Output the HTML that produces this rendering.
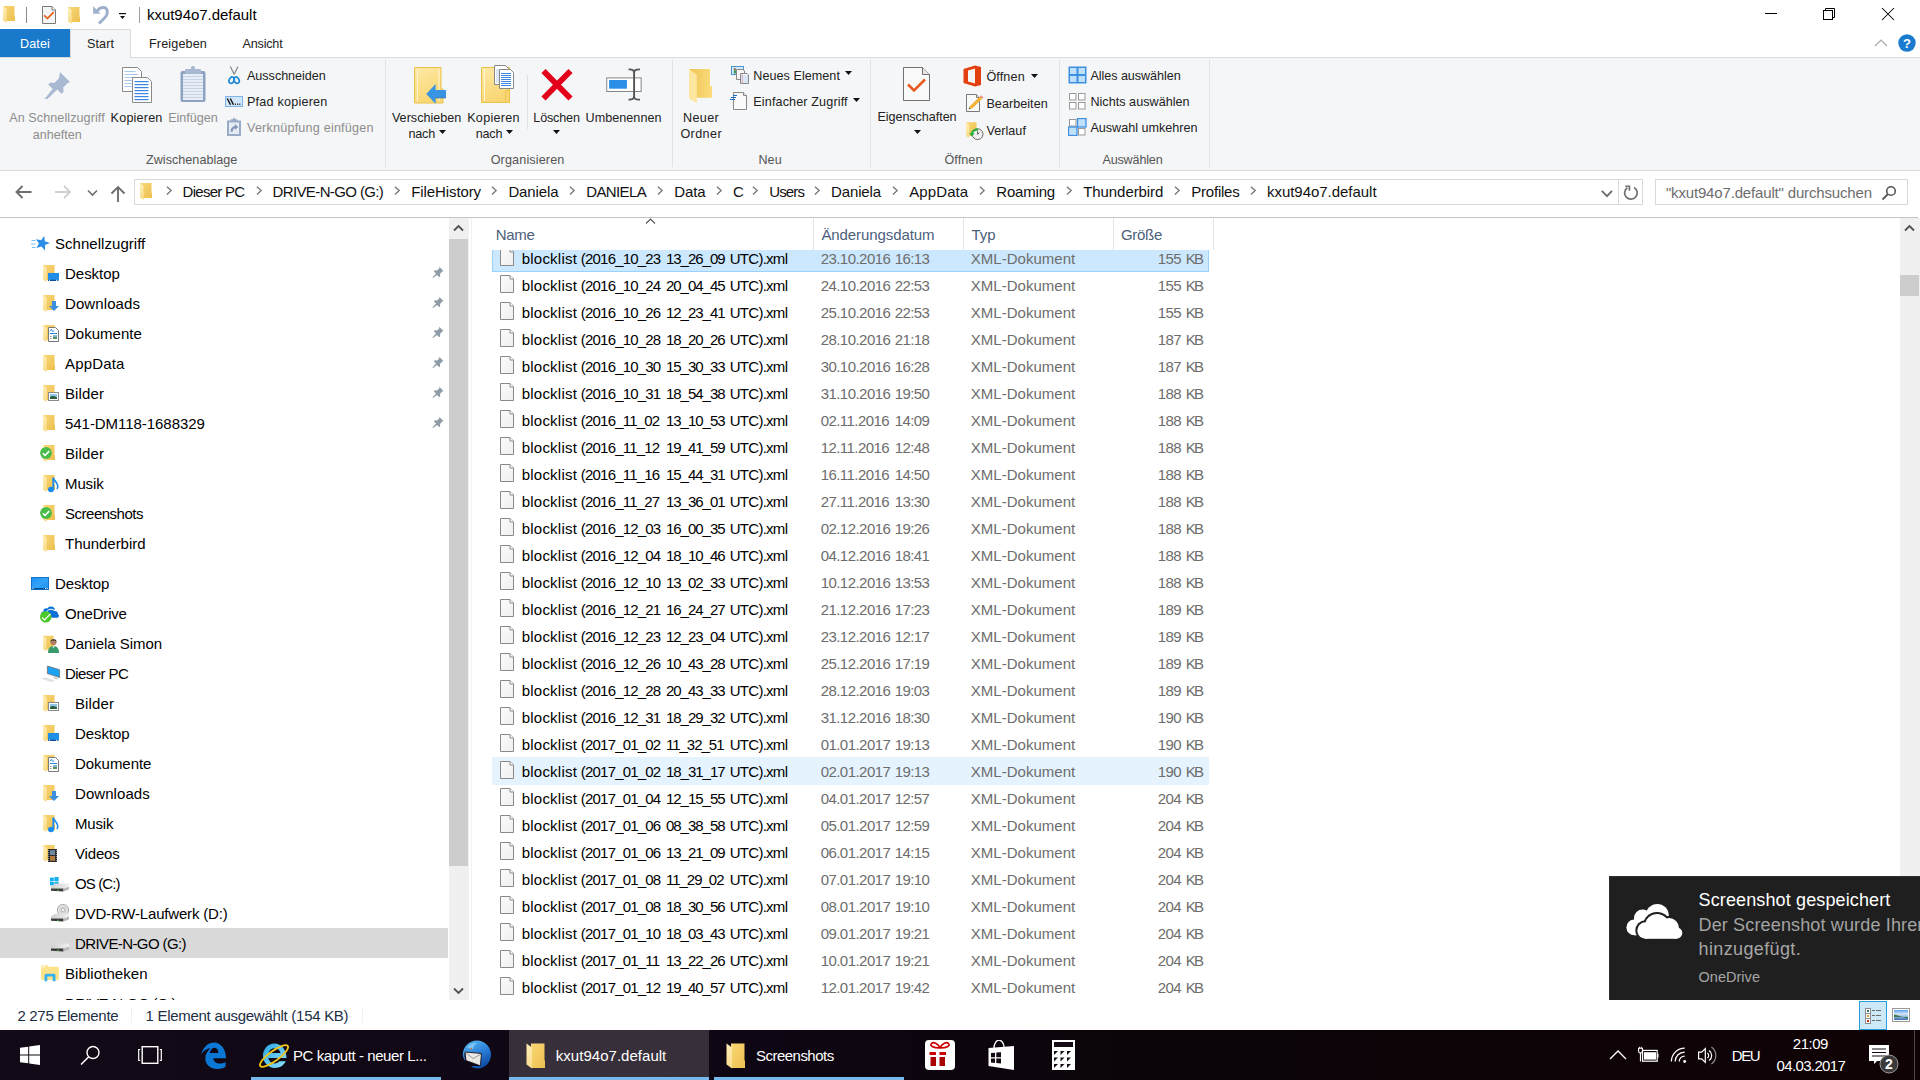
<!DOCTYPE html><html><head><meta charset="utf-8"><style>
html,body{margin:0;padding:0}
body{width:1920px;height:1080px;overflow:hidden;position:relative;background:#fff;font-family:"Liberation Sans",sans-serif}
.a{position:absolute;display:block}
.t{position:absolute;line-height:1px;white-space:nowrap}
</style></head><body>
<svg width="0" height="0" style="position:absolute">
<defs>
<linearGradient id="fg" x1="0" y1="0" x2="1" y2="1"><stop offset="0" stop-color="#f8d775"/><stop offset="1" stop-color="#eebf4f"/></linearGradient>
<linearGradient id="ff" x1="0" y1="0" x2="0" y2="1"><stop offset="0" stop-color="#ffeeb8"/><stop offset="1" stop-color="#f9dc8a"/></linearGradient>
<linearGradient id="fg2" x1="0" y1="0" x2="0.4" y2="1"><stop offset="0" stop-color="#fee9a6"/><stop offset="1" stop-color="#f9d673"/></linearGradient>
<symbol id="fold" viewBox="0 0 12 17"><path d="M0 0h11.5v10h0.5v5H0z" fill="url(#fg)"/><path d="M0 0l3.6 2.8V17L0 14.8z" fill="url(#ff)"/></symbol>
<linearGradient id="dg" x1="0" y1="0" x2="1" y2="1"><stop offset="0" stop-color="#fbfbfb"/><stop offset="1" stop-color="#efefef"/></linearGradient><symbol id="doc" viewBox="0 0 14 18"><path d="M0.5 0.5h9.5l3.5 3.5v13.5h-13z" fill="url(#dg)" stroke="#8a8a8a" stroke-linejoin="miter"/><path d="M10 0.5v3.5h3.5" fill="#fff" stroke="#8a8a8a"/></symbol>
<symbol id="pin" viewBox="0 0 12 12"><path d="M7 0.5l4.5 4.5-1.2 0.6-2.3 2.3 0.2 2.3-1 1-2.2-2.2L1 12 0.4 11.5 4 7.5 1.8 5.3l1-1 2.3 0.2 2.3-2.3z" fill="#8f9ca7"/></symbol>
</defs></svg>

<svg class="a" style="left:3px;top:6px;" width="12" height="17" viewBox="0 0 12 17"><use href="#fold"/></svg>
<div class="a" style="left:26px;top:7px;width:1px;height:16px;background:#8a8a8a;"></div>
<svg class="a" style="left:42px;top:6px;" width="14" height="18" viewBox="0 0 14 18"><path d="M0.5 0.5h9.5l3.5 3.5v13.5h-13z" fill="#f3f4f6" stroke="#7a7a7a"/><path d="M10 0.5v3.5h3.5" fill="#fff" stroke="#7a7a7a"/><path d="M2.1 9.4l3.4 3 6.2-6.3" fill="none" stroke="#ea5a0c" stroke-width="1.5"/></svg>
<svg class="a" style="left:68px;top:7px;" width="12" height="17" viewBox="0 0 12 17"><use href="#fold"/></svg>
<svg class="a" style="left:92px;top:5px;" width="18" height="20" viewBox="0 0 18 20"><path d="M1.1 1.1V8.8H8.5z" fill="#9fb0cc"/><path d="M4.5 7 C6.5 3.5 10 2.3 12 2.5 C14.5 2.8 15.3 5 15.3 7.5 C15.3 10 14 11.5 12.5 13 L7 18.5" fill="none" stroke="#9fb0cc" stroke-width="3"/></svg>
<svg class="a" style="left:119px;top:12px;" width="8" height="8" viewBox="0 0 8 8"><rect x="0" y="1" width="7" height="1.2" fill="#111"/><path d="M1 4h5L3.5 7z" fill="#111"/></svg>
<div class="a" style="left:139px;top:7px;width:1px;height:16px;background:#a0a0a0;"></div>
<div class="t" style="left:147.00px;top:14.00px;font-size:15px;color:#000;letter-spacing:-0.036px;">kxut94o7.default</div>
<div class="a" style="left:1765px;top:13px;width:12px;height:1px;background:#000;"></div>
<svg class="a" style="left:1822px;top:7px;" width="14" height="14" viewBox="0 0 14 14"><rect x="1.5" y="3.5" width="9" height="9" fill="none" stroke="#000"/><path d="M3.5 3.5V1.5h9v9h-2" fill="none" stroke="#000"/></svg>
<svg class="a" style="left:1881px;top:7px;" width="14" height="14" viewBox="0 0 14 14"><path d="M1 1l12 12M13 1L1 13" stroke="#000" stroke-width="1.05"/></svg>
<div class="a" style="left:0px;top:57px;width:1920px;height:1px;background:#dadbdc;"></div>
<div class="a" style="left:0px;top:29px;width:70px;height:28px;background:#1979ca;"></div>
<div class="t" style="left:20.00px;top:44.00px;font-size:12.6px;color:#fff;letter-spacing:0.117px;">Datei</div>
<div class="a" style="left:70px;top:29px;width:61px;height:29px;background:#f5f6f7;box-sizing:border-box;border:1px solid #dadbdc;border-bottom:none"></div>
<div class="t" style="left:87.00px;top:44.00px;font-size:12.6px;color:#222;letter-spacing:0.078px;">Start</div>
<div class="t" style="left:149.00px;top:44.00px;font-size:12.6px;color:#222;letter-spacing:0.140px;">Freigeben</div>
<div class="t" style="left:242.50px;top:44.00px;font-size:12.6px;color:#222;letter-spacing:-0.188px;">Ansicht</div>
<svg class="a" style="left:1874px;top:38px;" width="14" height="10" viewBox="0 0 14 10"><path d="M1 8l6-6 6 6" fill="none" stroke="#a8a8a8" stroke-width="1.2"/></svg>
<svg class="a" style="left:1898px;top:34px;" width="18" height="18" viewBox="0 0 18 18"><circle cx="9" cy="9" r="8.7" fill="#1a7bd0"/><text x="9" y="14.2" text-anchor="middle" font-family="Liberation Sans" font-weight="bold" font-size="13" fill="#fff">?</text></svg>
<div class="a" style="left:0px;top:58px;width:1920px;height:112px;background:#f5f6f7;"></div>
<div class="a" style="left:0px;top:170px;width:1920px;height:1px;background:#dadbdc;"></div>
<div class="a" style="left:385px;top:60px;width:1px;height:107px;background:#e2e3e4;"></div>
<div class="a" style="left:672px;top:60px;width:1px;height:107px;background:#e2e3e4;"></div>
<div class="a" style="left:870px;top:60px;width:1px;height:107px;background:#e2e3e4;"></div>
<div class="a" style="left:1059px;top:60px;width:1px;height:107px;background:#e2e3e4;"></div>
<div class="a" style="left:1209px;top:60px;width:1px;height:107px;background:#e2e3e4;"></div>
<div class="t" style="left:146.00px;top:160.00px;font-size:12.6px;color:#555;letter-spacing:0.025px;">Zwischenablage</div>
<div class="t" style="left:490.70px;top:160.00px;font-size:12.6px;color:#555;letter-spacing:0.139px;">Organisieren</div>
<div class="t" style="left:758.40px;top:160.00px;font-size:12.6px;color:#555;letter-spacing:0.095px;">Neu</div>
<div class="t" style="left:944.50px;top:160.00px;font-size:12.6px;color:#555;letter-spacing:0.067px;">Öffnen</div>
<div class="t" style="left:1102.40px;top:160.00px;font-size:12.6px;color:#555;letter-spacing:-0.160px;">Auswählen</div>
<svg class="a" style="left:43px;top:71px;" width="28" height="28" viewBox="0 0 28 28"><path d="M17 1l10 10-2.2 1-4.6 4.6 0.4 4.2-2 2-4.4-4.4L3 29.5 1.5 28 9.6 17.9 5.2 13.5l2-2 4.2 0.4L16 7.3z" fill="#a9b9d1"/></svg>
<div class="t" style="left:9.20px;top:118.00px;font-size:12.6px;color:#8d8d8d;letter-spacing:0.075px;">An Schnellzugriff</div>
<div class="t" style="left:32.70px;top:135.00px;font-size:12.6px;color:#8d8d8d;letter-spacing:-0.006px;">anheften</div>
<svg class="a" style="left:121px;top:66px;" width="32" height="38" viewBox="0 0 32 38"><path d="M1.5 1.5h15l4 4v20h-19z" fill="#fff" stroke="#8a8a8a"/><rect x="3.5" y="5" width="11" height="1" fill="#a9c8ee"/><rect x="3.5" y="8" width="14" height="1" fill="#a9c8ee"/><rect x="3.5" y="11" width="14" height="1" fill="#a9c8ee"/><rect x="3.5" y="14" width="14" height="1" fill="#a9c8ee"/><rect x="3.5" y="17" width="14" height="1" fill="#a9c8ee"/><rect x="3.5" y="20" width="14" height="1" fill="#a9c8ee"/><path d="M11.5 11.5h15l4 4v21h-19z" fill="#fff" stroke="#8a8a8a"/><rect x="13.5" y="15" width="14" height="1.2" fill="#3b86e0"/><rect x="13.5" y="18" width="14" height="1.2" fill="#3b86e0"/><rect x="13.5" y="21" width="14" height="1.2" fill="#3b86e0"/><rect x="13.5" y="24" width="14" height="1.2" fill="#3b86e0"/><rect x="13.5" y="27" width="14" height="1.2" fill="#3b86e0"/><rect x="13.5" y="30" width="14" height="1.2" fill="#3b86e0"/><rect x="13.5" y="33" width="14" height="1.2" fill="#3b86e0"/></svg>
<div class="t" style="left:110.60px;top:118.00px;font-size:12.6px;color:#222;letter-spacing:0.195px;">Kopieren</div>
<svg class="a" style="left:179px;top:65px;" width="28" height="39" viewBox="0 0 28 39"><rect x="1.5" y="6" width="25" height="31" rx="2" fill="#8ea3c1"/><rect x="4" y="9" width="20" height="26" fill="#e8eef7"/><rect x="4" y="11" width="20" height="1" fill="#c8d3e3"/><rect x="4" y="14" width="20" height="1" fill="#c8d3e3"/><rect x="4" y="17" width="20" height="1" fill="#c8d3e3"/><rect x="4" y="20" width="20" height="1" fill="#c8d3e3"/><rect x="4" y="23" width="20" height="1" fill="#c8d3e3"/><rect x="4" y="26" width="20" height="1" fill="#c8d3e3"/><rect x="4" y="29" width="20" height="1" fill="#c8d3e3"/><rect x="4" y="32" width="20" height="1" fill="#c8d3e3"/><rect x="6" y="4" width="16" height="5" rx="1" fill="#a9b9d1"/><rect x="12" y="1" width="4" height="4" rx="1.5" fill="#a9b9d1"/></svg>
<div class="t" style="left:168.20px;top:118.00px;font-size:12.6px;color:#8d8d8d;letter-spacing:-0.030px;">Einfügen</div>
<svg class="a" style="left:227px;top:65px;" width="14" height="20" viewBox="0 0 14 20"><path d="M3.3 1.5L7.3 9.5M11 1.5L7 9.5" stroke="#8a8a8a" stroke-width="1.3"/><ellipse cx="4.6" cy="15.2" rx="2.4" ry="3.3" transform="rotate(28 4.6 15.2)" fill="none" stroke="#1d87d6" stroke-width="1.7"/><ellipse cx="9.6" cy="15.2" rx="2.4" ry="3.3" transform="rotate(-28 9.6 15.2)" fill="none" stroke="#1d87d6" stroke-width="1.7"/></svg>
<div class="t" style="left:247.00px;top:76.00px;font-size:12.6px;color:#222;letter-spacing:-0.030px;">Ausschneiden</div>
<svg class="a" style="left:225px;top:96px;" width="18" height="11" viewBox="0 0 18 11"><rect x="0.5" y="0.5" width="17" height="10" fill="#cfe6fa" stroke="#7fb2e6"/><path d="M2.3 2.5l3.2 6.2M5.3 2.5l3.2 6.2" stroke="#111" stroke-width="1.4"/><rect x="9.8" y="7.6" width="1.2" height="1.2" fill="#111"/><rect x="12" y="7.6" width="1.2" height="1.2" fill="#111"/><rect x="14.2" y="7.6" width="1.2" height="1.2" fill="#111"/></svg>
<div class="t" style="left:247.00px;top:102.00px;font-size:12.6px;color:#222;letter-spacing:0.219px;">Pfad kopieren</div>
<svg class="a" style="left:226px;top:117px;" width="16" height="20" viewBox="0 0 16 20"><path d="M6.2 3L8 0.3 9.8 3z" fill="#9aabc6"/><rect x="4.5" y="2.3" width="7" height="2.2" fill="#9aabc6"/><rect x="1" y="3.5" width="14" height="15.5" fill="#9aabc6"/><rect x="3" y="5.5" width="10" height="11.5" fill="#e6ecf5"/><path d="M5.6 14.8C5.6 11.5 7 10.2 9.5 10" fill="none" stroke="#8196b6" stroke-width="2.2"/><path d="M8.8 7L12.3 10 8.8 13z" fill="#8196b6"/></svg>
<div class="t" style="left:247.00px;top:128.00px;font-size:12.6px;color:#8d8d8d;letter-spacing:0.205px;">Verknüpfung einfügen</div>
<svg class="a" style="left:413px;top:66px;" width="34" height="40" viewBox="0 0 34 40"><path d="M1.5 1.5H28V23H30V37H1.5Z" fill="url(#fg2)" stroke="#e9c24c"/><path d="M4.5 3V35.5M26 3V35.5" stroke="#fff6d6" stroke-width="1"/><path d="M13.25 28L22.6 18V24H33V31.8H22.6V37.75Z" fill="#3a94e4"/><path d="M22.6 31.8H33" stroke="#2576c4" stroke-width="1"/></svg>
<div class="t" style="left:391.90px;top:118.00px;font-size:12.6px;color:#222;letter-spacing:0.014px;">Verschieben</div>
<div class="t" style="left:408.40px;top:134.00px;font-size:12.6px;color:#222;letter-spacing:-0.181px;">nach</div>
<svg class="a" style="left:439px;top:130px;" width="7" height="4" viewBox="0 0 7 4"><path d="M0 0h7L3.5 4z" fill="#111"/></svg>
<svg class="a" style="left:480px;top:64px;" width="36" height="40" viewBox="0 0 36 40"><path d="M1.5 3.5H29.5V38.5H1.5Z" fill="url(#fg2)" stroke="#e9c24c"/><path d="M4.5 5V37" stroke="#fff6d6"/><path d="M25.5 38.5V27Q27.5 24.5 29.5 27V38.5z" fill="#fbd370" stroke="#e9c24c" stroke-width="0.8"/><path d="M14.5 1.5H25.5L28.5 4.5V20.5H14.5Z" fill="#fff" stroke="#888"/><path d="M16 6h7" stroke="#a9c8ee" stroke-width="0.9"/><path d="M16 8h7" stroke="#a9c8ee" stroke-width="0.9"/><path d="M16 10h7" stroke="#a9c8ee" stroke-width="0.9"/><path d="M16 12h7" stroke="#a9c8ee" stroke-width="0.9"/><path d="M16 14h7" stroke="#a9c8ee" stroke-width="0.9"/><path d="M16 16h7" stroke="#a9c8ee" stroke-width="0.9"/><path d="M16 18h7" stroke="#a9c8ee" stroke-width="0.9"/><path d="M19.5 5.5H30.5L33.5 8.5V24.5H19.5Z" fill="#fff" stroke="#888"/><path d="M21 9.5h10" stroke="#3b86e0" stroke-width="1"/><path d="M21 11.5h10" stroke="#3b86e0" stroke-width="1"/><path d="M21 13.5h10" stroke="#3b86e0" stroke-width="1"/><path d="M21 15.5h10" stroke="#3b86e0" stroke-width="1"/><path d="M21 17.5h10" stroke="#3b86e0" stroke-width="1"/><path d="M21 19.5h10" stroke="#3b86e0" stroke-width="1"/><path d="M21 21.5h10" stroke="#3b86e0" stroke-width="1"/></svg>
<div class="t" style="left:467.20px;top:118.00px;font-size:12.6px;color:#222;letter-spacing:0.283px;">Kopieren</div>
<div class="t" style="left:475.70px;top:134.00px;font-size:12.6px;color:#222;letter-spacing:-0.181px;">nach</div>
<svg class="a" style="left:506px;top:130px;" width="7" height="4" viewBox="0 0 7 4"><path d="M0 0h7L3.5 4z" fill="#111"/></svg>
<div class="a" style="left:527px;top:75px;width:1px;height:54px;background:#dfe0e1;"></div>
<svg class="a" style="left:541px;top:69px;" width="32" height="32" viewBox="0 0 32 32"><path d="M2.5 2L29.5 29.5M29.5 2L2.5 29.5" stroke="#e2001a" stroke-width="5.8"/></svg>
<div class="t" style="left:533.30px;top:118.00px;font-size:12.6px;color:#222;letter-spacing:-0.162px;">Löschen</div>
<svg class="a" style="left:553px;top:130px;" width="7" height="4" viewBox="0 0 7 4"><path d="M0 0h7L3.5 4z" fill="#111"/></svg>
<svg class="a" style="left:605px;top:67px;" width="37" height="35" viewBox="0 0 37 35"><rect x="1.75" y="10.9" width="34.4" height="13.6" fill="#fff" stroke="#888"/><rect x="4.1" y="13" width="17.8" height="8.7" fill="#2b8ee6"/><path d="M29.1 4V30.5" stroke="#555" stroke-width="1.9"/><path d="M23.5 2.5C26 2.3 28.5 2.8 29.1 4.8 29.7 2.8 32.2 2.3 35 2.5M23.5 32.6C26 32.8 28.5 32.3 29.1 30.2 29.7 32.3 32.2 32.8 35 32.6" fill="none" stroke="#555" stroke-width="1.7"/></svg>
<div class="t" style="left:585.50px;top:118.00px;font-size:12.6px;color:#222;letter-spacing:0.044px;">Umbenennen</div>
<svg class="a" style="left:688px;top:68px;" width="25" height="36" viewBox="0 0 25 36"><defs><linearGradient id="nfg" x1="0" y1="0" x2="1" y2="0"><stop offset="0" stop-color="#edc455"/><stop offset="1" stop-color="#fbdc7a"/></linearGradient></defs><path d="M1 1H22V18.3H24V29.7H1z" fill="url(#nfg)"/><path d="M1 1L8.8 6.8V34.9L1 30.6z" fill="#fde6a0"/></svg>
<div class="t" style="left:683.10px;top:118.00px;font-size:12.6px;color:#222;letter-spacing:0.316px;">Neuer</div>
<div class="t" style="left:680.40px;top:134.00px;font-size:12.6px;color:#222;letter-spacing:0.398px;">Ordner</div>
<svg class="a" style="left:730px;top:65px;" width="20" height="20" viewBox="0 0 20 20"><rect x="1.5" y="1.5" width="12" height="8" fill="#d5ebfa" stroke="#4a94cc"/><circle cx="4.8" cy="4" r="1.1" fill="#8a5a3a"/><rect x="3.8" y="5.2" width="2.2" height="3.3" fill="#3a9a5a"/><path d="M6.5 4.5h6.5l1.5 1.5v8.5h-8z" fill="#f7f7f7" stroke="#888"/><path d="M10.5 8.5h6.5l1.5 1.5v8.5h-8z" fill="#fff" stroke="#888"/><path d="M11 11h7M11 13h7M11 15h7M11 17h7" stroke="#a9c8ee" stroke-width="0.9"/><path d="M12.3 9v9.5" stroke="#eaa0a0" stroke-width="0.8"/></svg>
<div class="t" style="left:753.30px;top:76.00px;font-size:12.6px;color:#222;letter-spacing:0.043px;">Neues Element</div>
<svg class="a" style="left:845px;top:71px;" width="7" height="4" viewBox="0 0 7 4"><path d="M0 0h7L3.5 4z" fill="#111"/></svg>
<svg class="a" style="left:729px;top:91px;" width="20" height="20" viewBox="0 0 20 20"><path d="M4.5 1.5h10l3 3v14h-13z" fill="#fafafa" stroke="#888"/><path d="M14.5 1.5v3h3" fill="#eee" stroke="#888"/><path d="M4 4.5h4M2 6.5h5M1 8.5h5" stroke="#1d6fc1" stroke-width="1.2"/></svg>
<div class="t" style="left:753.30px;top:102.00px;font-size:12.6px;color:#222;letter-spacing:0.129px;">Einfacher Zugriff</div>
<svg class="a" style="left:853px;top:98px;" width="7" height="4" viewBox="0 0 7 4"><path d="M0 0h7L3.5 4z" fill="#111"/></svg>
<svg class="a" style="left:902px;top:66px;" width="30" height="38" viewBox="0 0 30 38"><path d="M1.5 1.5h19l7 7v26h-26z" fill="#fafafa" stroke="#707070"/><path d="M20.5 1.5v7h7" fill="#e6e6e6" stroke="#707070"/><path d="M6 18.5l6 6 11-11" fill="none" stroke="#e85c23" stroke-width="2.6"/></svg>
<div class="t" style="left:877.40px;top:117.00px;font-size:12.6px;color:#222;letter-spacing:-0.050px;">Eigenschaften</div>
<svg class="a" style="left:914px;top:130px;" width="7" height="4" viewBox="0 0 7 4"><path d="M0 0h7L3.5 4z" fill="#111"/></svg>
<svg class="a" style="left:963px;top:65px;" width="19" height="22" viewBox="0 0 19 22"><path d="M0.5 4L12 0.5 18 2v18l-6 1.5L0.5 18z" fill="#e3400f"/><path d="M5 5.5l7-2v15l-7-2z" fill="#f5f6f7"/></svg>
<div class="t" style="left:986.40px;top:77.00px;font-size:12.6px;color:#222;letter-spacing:0.134px;">Öffnen</div>
<svg class="a" style="left:1031px;top:74px;" width="7" height="4" viewBox="0 0 7 4"><path d="M0 0h7L3.5 4z" fill="#111"/></svg>
<svg class="a" style="left:965px;top:93px;" width="19" height="20" viewBox="0 0 19 20"><path d="M1.5 1.5h10l3 3v14h-13z" fill="#f8f8f8" stroke="#7a7a7a"/><path d="M11.5 1.5v3h3" fill="#e8e8e8" stroke="#7a7a7a"/><path d="M3.8 16.2l1.2-3.3 10-9.5 2.2 2.2-9.6 9.6z" fill="#f2b233"/><path d="M15 3.4l1.3-1.2 2.2 2.2-1.3 1.2z" fill="#ee8a8a"/><path d="M3.8 16.2l0.5-1.6 1.2 1.1z" fill="#333"/></svg>
<div class="t" style="left:986.40px;top:104.00px;font-size:12.6px;color:#222;letter-spacing:0.046px;">Bearbeiten</div>
<svg class="a" style="left:965px;top:121px;" width="20" height="20" viewBox="0 0 20 20"><use href="#fold" x="1" y="0.6" width="11" height="17"/><circle cx="12.6" cy="13.2" r="5.4" fill="#eeeeee" stroke="#6a6a6a" stroke-width="1"/><path d="M12.6 10.3V13.2l1.7-1.4" fill="none" stroke="#333" stroke-width="0.8"/><path d="M13 8.6C9.5 8.3 7.2 10.2 6.9 12.8" fill="none" stroke="#27b03a" stroke-width="2.3"/><path d="M4.2 12.2H9.6L6.9 15.6z" fill="#27b03a"/></svg>
<div class="t" style="left:986.40px;top:131.00px;font-size:12.6px;color:#222;letter-spacing:0.053px;">Verlauf</div>
<svg class="a" style="left:1068px;top:66px;" width="19" height="18" viewBox="0 0 19 18"><rect x="0.5" y="0.5" width="18" height="17" fill="#3d8fe0"/><rect x="2" y="2" width="6.5" height="6" fill="#bfe0fb"/><rect x="10.5" y="2" width="6.5" height="6" fill="#bfe0fb"/><rect x="2" y="10" width="6.5" height="6" fill="#bfe0fb"/><rect x="10.5" y="10" width="6.5" height="6" fill="#bfe0fb"/></svg>
<div class="t" style="left:1090.40px;top:76.00px;font-size:12.6px;color:#222;letter-spacing:-0.050px;">Alles auswählen</div>
<svg class="a" style="left:1069px;top:93px;" width="17" height="17" viewBox="0 0 17 17"><rect x="0.5" y="0.5" width="6.5" height="6.5" fill="#fff" stroke="#999"/><rect x="9.5" y="0.5" width="6.5" height="6.5" fill="#fff" stroke="#999"/><rect x="0.5" y="9.5" width="6.5" height="6.5" fill="#fff" stroke="#999"/><rect x="9.5" y="9.5" width="6.5" height="6.5" fill="#fff" stroke="#999"/></svg>
<div class="t" style="left:1090.40px;top:102.00px;font-size:12.6px;color:#222;letter-spacing:0.034px;">Nichts auswählen</div>
<svg class="a" style="left:1068px;top:118px;" width="19" height="18" viewBox="0 0 19 18"><rect x="1.5" y="1.5" width="6.5" height="6.5" fill="#fff" stroke="#999"/><rect x="9.5" y="0.5" width="8.5" height="8.5" fill="#bfe0fb" stroke="#3d8fe0" stroke-width="1.3"/><rect x="0.5" y="9" width="8.5" height="8.5" fill="#bfe0fb" stroke="#3d8fe0" stroke-width="1.3"/><rect x="10.5" y="10.5" width="6.5" height="6.5" fill="#fff" stroke="#999"/></svg>
<div class="t" style="left:1090.40px;top:128.00px;font-size:12.6px;color:#222;letter-spacing:-0.003px;">Auswahl umkehren</div>
<svg class="a" style="left:15px;top:185px;" width="18" height="14" viewBox="0 0 18 14"><path d="M1.5 7h15M7.5 1l-6 6 6 6" fill="none" stroke="#6e6e6e" stroke-width="1.9"/></svg>
<svg class="a" style="left:54px;top:185px;" width="18" height="14" viewBox="0 0 18 14"><path d="M1 7h15M10 1l6 6-6 6" fill="none" stroke="#d0d0d0" stroke-width="1.9"/></svg>
<svg class="a" style="left:87px;top:189px;" width="11" height="8" viewBox="0 0 11 8"><path d="M1 1.5l4.5 4.5 4.5-4.5" fill="none" stroke="#6e6e6e" stroke-width="1.6"/></svg>
<svg class="a" style="left:110px;top:185px;" width="16" height="17" viewBox="0 0 16 17"><path d="M8 2v15M1.5 8.5L8 2l6.5 6.5" fill="none" stroke="#6e6e6e" stroke-width="1.9"/></svg>
<div class="a" style="left:134px;top:179px;width:1509px;height:26px;background:#fff;box-sizing:border-box;border:1px solid #d9d9d9"></div>
<div class="a" style="left:1618px;top:180px;width:1px;height:24px;background:#d9d9d9;"></div>
<svg class="a" style="left:140px;top:183px;" width="12" height="17" viewBox="0 0 12 17"><use href="#fold"/></svg>
<div class="t" style="left:182.50px;top:191.00px;font-size:15px;color:#111;letter-spacing:-0.706px;">Dieser PC</div>
<svg class="a" style="left:165.5px;top:186px;" width="7" height="10" viewBox="0 0 7 10"><path d="M0.9 0.7L5.2 4.6 0.9 8.5" fill="none" stroke="#777" stroke-width="1.3"/></svg>
<div class="t" style="left:272.50px;top:191.00px;font-size:15px;color:#111;letter-spacing:-0.616px;">DRIVE-N-GO (G:)</div>
<svg class="a" style="left:255.5px;top:186px;" width="7" height="10" viewBox="0 0 7 10"><path d="M0.9 0.7L5.2 4.6 0.9 8.5" fill="none" stroke="#777" stroke-width="1.3"/></svg>
<div class="t" style="left:411.25px;top:191.00px;font-size:15px;color:#111;letter-spacing:-0.099px;">FileHistory</div>
<svg class="a" style="left:394.25px;top:186px;" width="7" height="10" viewBox="0 0 7 10"><path d="M0.9 0.7L5.2 4.6 0.9 8.5" fill="none" stroke="#777" stroke-width="1.3"/></svg>
<div class="t" style="left:508.40px;top:191.00px;font-size:15px;color:#111;letter-spacing:-0.124px;">Daniela</div>
<svg class="a" style="left:491.4px;top:186px;" width="7" height="10" viewBox="0 0 7 10"><path d="M0.9 0.7L5.2 4.6 0.9 8.5" fill="none" stroke="#777" stroke-width="1.3"/></svg>
<div class="t" style="left:586.25px;top:191.00px;font-size:15px;color:#111;letter-spacing:-0.634px;">DANIELA</div>
<svg class="a" style="left:569.25px;top:186px;" width="7" height="10" viewBox="0 0 7 10"><path d="M0.9 0.7L5.2 4.6 0.9 8.5" fill="none" stroke="#777" stroke-width="1.3"/></svg>
<div class="t" style="left:674.30px;top:191.00px;font-size:15px;color:#111;letter-spacing:-0.121px;">Data</div>
<svg class="a" style="left:657.3px;top:186px;" width="7" height="10" viewBox="0 0 7 10"><path d="M0.9 0.7L5.2 4.6 0.9 8.5" fill="none" stroke="#777" stroke-width="1.3"/></svg>
<div class="t" style="left:732.90px;top:191.00px;font-size:15px;color:#111;">C</div>
<svg class="a" style="left:715.9px;top:186px;" width="7" height="10" viewBox="0 0 7 10"><path d="M0.9 0.7L5.2 4.6 0.9 8.5" fill="none" stroke="#777" stroke-width="1.3"/></svg>
<div class="t" style="left:769.30px;top:191.00px;font-size:15px;color:#111;letter-spacing:-0.894px;">Users</div>
<svg class="a" style="left:752.3px;top:186px;" width="7" height="10" viewBox="0 0 7 10"><path d="M0.9 0.7L5.2 4.6 0.9 8.5" fill="none" stroke="#777" stroke-width="1.3"/></svg>
<div class="t" style="left:831.00px;top:191.00px;font-size:15px;color:#111;letter-spacing:-0.124px;">Daniela</div>
<svg class="a" style="left:814px;top:186px;" width="7" height="10" viewBox="0 0 7 10"><path d="M0.9 0.7L5.2 4.6 0.9 8.5" fill="none" stroke="#777" stroke-width="1.3"/></svg>
<div class="t" style="left:909.25px;top:191.00px;font-size:15px;color:#111;letter-spacing:0.090px;">AppData</div>
<svg class="a" style="left:892.25px;top:186px;" width="7" height="10" viewBox="0 0 7 10"><path d="M0.9 0.7L5.2 4.6 0.9 8.5" fill="none" stroke="#777" stroke-width="1.3"/></svg>
<div class="t" style="left:996.25px;top:191.00px;font-size:15px;color:#111;letter-spacing:-0.183px;">Roaming</div>
<svg class="a" style="left:979.25px;top:186px;" width="7" height="10" viewBox="0 0 7 10"><path d="M0.9 0.7L5.2 4.6 0.9 8.5" fill="none" stroke="#777" stroke-width="1.3"/></svg>
<div class="t" style="left:1083.25px;top:191.00px;font-size:15px;color:#111;letter-spacing:-0.080px;">Thunderbird</div>
<svg class="a" style="left:1066.25px;top:186px;" width="7" height="10" viewBox="0 0 7 10"><path d="M0.9 0.7L5.2 4.6 0.9 8.5" fill="none" stroke="#777" stroke-width="1.3"/></svg>
<div class="t" style="left:1191.25px;top:191.00px;font-size:15px;color:#111;letter-spacing:-0.221px;">Profiles</div>
<svg class="a" style="left:1174.25px;top:186px;" width="7" height="10" viewBox="0 0 7 10"><path d="M0.9 0.7L5.2 4.6 0.9 8.5" fill="none" stroke="#777" stroke-width="1.3"/></svg>
<div class="t" style="left:1267.00px;top:191.00px;font-size:15px;color:#111;letter-spacing:-0.036px;">kxut94o7.default</div>
<svg class="a" style="left:1250px;top:186px;" width="7" height="10" viewBox="0 0 7 10"><path d="M0.9 0.7L5.2 4.6 0.9 8.5" fill="none" stroke="#777" stroke-width="1.3"/></svg>
<svg class="a" style="left:1600px;top:188px;" width="14" height="10" viewBox="0 0 14 10"><path d="M1.8 2.9L7 8.1l5-5.2" fill="none" stroke="#6e6e6e" stroke-width="1.9"/></svg>
<svg class="a" style="left:1622px;top:183px;" width="18" height="18" viewBox="0 0 18 18"><path d="M12.05 4.44A6.3 6.3 0 1 1 5.3 4.7" fill="none" stroke="#707070" stroke-width="1.7"/><path d="M3.3 3.25H7.4V7.7" fill="none" stroke="#707070" stroke-width="1.7"/></svg>
<div class="a" style="left:1655px;top:179px;width:253px;height:26px;background:#fff;box-sizing:border-box;border:1px solid #d9d9d9"></div>
<div class="t" style="left:1665.90px;top:192.00px;font-size:15px;color:#6d6d6d;letter-spacing:-0.160px;">"kxut94o7.default" durchsuchen</div>
<svg class="a" style="left:1881px;top:185px;" width="16" height="16" viewBox="0 0 16 16"><circle cx="10" cy="6" r="4.3" fill="none" stroke="#555" stroke-width="1.6"/><path d="M7 9L1.5 14.5" stroke="#555" stroke-width="1.8"/></svg>
<div class="a" style="left:0px;top:217px;width:1918px;height:1px;background:#c5c5c5;"></div>
<div class="a" style="left:0px;top:928px;width:448px;height:30px;background:#d9d9d9;"></div>
<div class="a" style="left:0;top:218px;width:449px;height:782px;overflow:hidden">
<div class="t" style="left:55.00px;top:25.00px;font-size:15px;color:#000;letter-spacing:0.038px;">Schnellzugriff</div>
<svg class="a" style="left:30px;top:16px;" width="20" height="18" viewBox="0 0 20 18"><path d="M14.27 1.96 L14.86 7.22 L19.89 8.90 L15.07 11.10 L15.02 16.40 L11.45 12.49 L6.39 14.08 L9.00 9.47 L5.93 5.16 L11.12 6.22z" fill="#2b8de8"/><path d="M1.5 6.5h4M1 10h4.5M2 13.5h3.5" stroke="#7cc0f2" stroke-width="1"/></svg>
<div class="t" style="left:65.00px;top:55.00px;font-size:15px;color:#000;letter-spacing:-0.018px;">Desktop</div>
<svg class="a" style="left:43px;top:47px;" width="12" height="17" viewBox="0 0 12 17"><use href="#fold"/></svg>
<svg class="a" style="left:48px;top:55px;" width="11" height="8" viewBox="0 0 11 8"><rect x="0" y="0" width="11" height="8" fill="#1e8ee8"/><rect x="0" y="6.8" width="11" height="1.2" fill="#0b4d8f"/><rect x="1" y="6.8" width="1" height="1" fill="#fff"/><rect x="8" y="6.8" width="1" height="1" fill="#fff"/><rect x="9.6" y="6.8" width="1" height="1" fill="#fff"/></svg>
<svg class="a" style="left:432px;top:48px;" width="12" height="12" viewBox="0 0 12 12"><use href="#pin"/></svg>
<div class="t" style="left:65.00px;top:85.00px;font-size:15px;color:#000;letter-spacing:0.099px;">Downloads</div>
<svg class="a" style="left:43px;top:77px;" width="12" height="17" viewBox="0 0 12 17"><use href="#fold"/></svg>
<svg class="a" style="left:49px;top:83px;" width="10" height="10" viewBox="0 0 10 10"><path d="M3 0h4v5h3L5 10 0 5h3z" fill="#3b8fe0"/></svg>
<svg class="a" style="left:432px;top:78px;" width="12" height="12" viewBox="0 0 12 12"><use href="#pin"/></svg>
<div class="t" style="left:65.00px;top:115.00px;font-size:15px;color:#000;letter-spacing:0.022px;">Dokumente</div>
<svg class="a" style="left:43px;top:107px;" width="12" height="17" viewBox="0 0 12 17"><use href="#fold"/></svg>
<svg class="a" style="left:48px;top:109px;" width="11" height="15" viewBox="0 0 11 15"><path d="M0.5 0.5h7l3 3v11h-10z" fill="#fff" stroke="#7a7a7a"/><path d="M2 4.2l1.5-2 0.8 2h2" fill="none" stroke="#2a8be0" stroke-width="0.9"/><rect x="2" y="6" width="7" height="1" fill="#2a8be0"/><rect x="2" y="9" width="1.5" height="0.8" fill="#777"/><rect x="2" y="11" width="1.5" height="0.8" fill="#777"/><rect x="5" y="8.5" width="4" height="3.5" fill="#5a8f5a"/><rect x="5" y="8.5" width="4" height="1.5" fill="#7ab0e0"/></svg>
<svg class="a" style="left:432px;top:108px;" width="12" height="12" viewBox="0 0 12 12"><use href="#pin"/></svg>
<div class="t" style="left:65.00px;top:145.00px;font-size:15px;color:#000;letter-spacing:0.175px;">AppData</div>
<svg class="a" style="left:43px;top:137px;" width="12" height="17" viewBox="0 0 12 17"><use href="#fold"/></svg>
<svg class="a" style="left:432px;top:138px;" width="12" height="12" viewBox="0 0 12 12"><use href="#pin"/></svg>
<div class="t" style="left:65.00px;top:175.00px;font-size:15px;color:#000;letter-spacing:0.108px;">Bilder</div>
<svg class="a" style="left:43px;top:167px;" width="12" height="17" viewBox="0 0 12 17"><use href="#fold"/></svg>
<svg class="a" style="left:48px;top:174px;" width="11" height="9" viewBox="0 0 11 9"><rect x="0.5" y="0.5" width="10" height="8" fill="#fff" stroke="#8a8a8a"/><rect x="2" y="2" width="7" height="5" fill="#8cc4ec"/><path d="M2 5c2-1.5 4-1.5 7 0.5V7H2z" fill="#2e5e3e"/></svg>
<svg class="a" style="left:432px;top:168px;" width="12" height="12" viewBox="0 0 12 12"><use href="#pin"/></svg>
<div class="t" style="left:65.00px;top:205.00px;font-size:15px;color:#000;letter-spacing:-0.050px;">541-DM118-1688329</div>
<svg class="a" style="left:43px;top:197px;" width="12" height="17" viewBox="0 0 12 17"><use href="#fold"/></svg>
<svg class="a" style="left:432px;top:198px;" width="12" height="12" viewBox="0 0 12 12"><use href="#pin"/></svg>
<div class="t" style="left:65.00px;top:235.00px;font-size:15px;color:#000;letter-spacing:0.108px;">Bilder</div>
<svg class="a" style="left:43px;top:227px;" width="12" height="17" viewBox="0 0 12 17"><use href="#fold"/></svg>
<svg class="a" style="left:40px;top:229px;" width="12" height="12" viewBox="0 0 12 12"><circle cx="6" cy="6" r="5.9" fill="#48bb48"/><path d="M2.8 6.2l2.2 2.2 4.3-4.3" fill="none" stroke="#fff" stroke-width="1.5"/></svg>
<div class="t" style="left:65.00px;top:265.00px;font-size:15px;color:#000;letter-spacing:-0.114px;">Musik</div>
<svg class="a" style="left:43px;top:257px;" width="12" height="17" viewBox="0 0 12 17"><use href="#fold"/></svg>
<svg class="a" style="left:48px;top:259px;" width="11" height="16" viewBox="0 0 11 16"><path d="M5.3 0.5v12" stroke="#1a8cf0" stroke-width="1.8"/><ellipse cx="3" cy="12.5" rx="3" ry="2.7" fill="#1a8cf0"/><path d="M5.3 1c0.8 3 4.5 4.5 4.5 8 0 1.5-0.5 2.5-1 3" fill="none" stroke="#1a8cf0" stroke-width="1.6"/></svg>
<div class="t" style="left:65.00px;top:295.00px;font-size:15px;color:#000;letter-spacing:-0.489px;">Screenshots</div>
<svg class="a" style="left:43px;top:287px;" width="12" height="17" viewBox="0 0 12 17"><use href="#fold"/></svg>
<svg class="a" style="left:40px;top:289px;" width="12" height="12" viewBox="0 0 12 12"><circle cx="6" cy="6" r="5.9" fill="#48bb48"/><path d="M2.8 6.2l2.2 2.2 4.3-4.3" fill="none" stroke="#fff" stroke-width="1.5"/></svg>
<div class="t" style="left:65.00px;top:325.00px;font-size:15px;color:#000;letter-spacing:-0.035px;">Thunderbird</div>
<svg class="a" style="left:43px;top:317px;" width="12" height="17" viewBox="0 0 12 17"><use href="#fold"/></svg>
<div class="t" style="left:55.00px;top:365.00px;font-size:15px;color:#000;letter-spacing:-0.118px;">Desktop</div>
<svg class="a" style="left:31px;top:359px;" width="18" height="13" viewBox="0 0 18 13"><defs><linearGradient id="dkg" x1="0" y1="0" x2="1" y2="1"><stop offset="0" stop-color="#1a8cf0"/><stop offset="0.5" stop-color="#33a4f8"/><stop offset="1" stop-color="#1a8cf0"/></linearGradient></defs><rect x="0" y="0" width="18" height="13" fill="url(#dkg)"/><rect x="0.5" y="0.5" width="17" height="12" fill="none" stroke="#1570c8"/><rect x="1" y="11" width="16" height="1.2" fill="#0a4e96"/><rect x="1.5" y="11" width="1" height="1" fill="#fff"/><rect x="14" y="11" width="1" height="1" fill="#fff"/><rect x="15.7" y="11" width="1" height="1" fill="#fff"/></svg>
<div class="t" style="left:65.00px;top:395.00px;font-size:15px;color:#000;letter-spacing:-0.207px;">OneDrive</div>
<svg class="a" style="left:41px;top:388px;" width="18" height="12" viewBox="11.3 14 56 34.6"><g fill="#0a72d6"><circle cx="19.3" cy="37.4" r="7.9"/><circle cx="27.5" cy="28" r="8.5"/><circle cx="42.3" cy="25.5" r="11.5"/><rect x="19.3" y="28" width="26" height="17.3"/></g><g fill="#fff"><circle cx="42" cy="36" r="14.5"/><circle cx="54" cy="38" r="12.5"/><circle cx="61.5" cy="43" r="8.3"/><circle cx="30.5" cy="40.5" r="10.7"/><rect x="27.5" y="33.5" width="36.5" height="17.1"/></g><g fill="#0a72d6"><circle cx="42" cy="36" r="12"/><circle cx="54" cy="38" r="10"/><circle cx="61.5" cy="43" r="5.8"/><circle cx="30.5" cy="40.5" r="8.2"/><rect x="30" y="36" width="31.5" height="12.8"/></g></svg>
<svg class="a" style="left:39px;top:392px;" width="13" height="13" viewBox="0 0 13 13"><circle cx="6.7" cy="6.9" r="5.7" fill="#4ec92a"/><path d="M3.2 7.5l2.3 2.3 6-6" fill="none" stroke="#fff" stroke-width="1.2"/></svg>
<div class="t" style="left:65.00px;top:425.00px;font-size:15px;color:#000;letter-spacing:-0.042px;">Daniela Simon</div>
<svg class="a" style="left:42px;top:416px;" width="18" height="20" viewBox="0 0 18 20"><use href="#fold" x="1" y="1" width="11" height="17"/><path d="M6 19C6 14.5 8 12 11.5 12S17 14.5 17 19z" fill="#3a9a6a"/><path d="M10.2 12.2L11.5 14.3 12.8 12.2z" fill="#e8f0ee"/><circle cx="11.5" cy="8.2" r="3" fill="#b08060"/><path d="M8.4 7.8C8.2 4.5 14.8 4.5 14.6 7.8 13.5 6.2 9.5 6.2 8.4 7.8z" fill="#2e2e2e"/></svg>
<div class="t" style="left:65.00px;top:455.00px;font-size:15px;color:#000;letter-spacing:-0.572px;">Dieser PC</div>
<svg class="a" style="left:40px;top:447px;" width="22" height="19" viewBox="0 0 22 19"><path d="M7.4 1.1L19.6 4.7V12.5L7.4 8.6z" fill="#1aa3f5" stroke="#6e6e6e" stroke-width="0.8"/><path d="M13.5 11.8L18 13.2V14.4L13.5 13.2z" fill="#c8c8c8"/><path d="M1 13.6L5.2 12.6 15 15.6 10.8 17z" fill="#dde0e4"/></svg>
<div class="t" style="left:75.00px;top:485.00px;font-size:15px;color:#000;letter-spacing:0.108px;">Bilder</div>
<svg class="a" style="left:43px;top:477px;" width="12" height="17" viewBox="0 0 12 17"><use href="#fold"/></svg>
<svg class="a" style="left:48px;top:484px;" width="11" height="9" viewBox="0 0 11 9"><rect x="0.5" y="0.5" width="10" height="8" fill="#fff" stroke="#8a8a8a"/><rect x="2" y="2" width="7" height="5" fill="#8cc4ec"/><path d="M2 5c2-1.5 4-1.5 7 0.5V7H2z" fill="#2e5e3e"/></svg>
<div class="t" style="left:75.00px;top:515.00px;font-size:15px;color:#000;letter-spacing:-0.061px;">Desktop</div>
<svg class="a" style="left:43px;top:507px;" width="12" height="17" viewBox="0 0 12 17"><use href="#fold"/></svg>
<svg class="a" style="left:48px;top:515px;" width="11" height="8" viewBox="0 0 11 8"><rect x="0" y="0" width="11" height="8" fill="#1e8ee8"/><rect x="0" y="6.8" width="11" height="1.2" fill="#0b4d8f"/><rect x="1" y="6.8" width="1" height="1" fill="#fff"/><rect x="8" y="6.8" width="1" height="1" fill="#fff"/><rect x="9.6" y="6.8" width="1" height="1" fill="#fff"/></svg>
<div class="t" style="left:75.00px;top:545.00px;font-size:15px;color:#000;letter-spacing:-0.034px;">Dokumente</div>
<svg class="a" style="left:43px;top:537px;" width="12" height="17" viewBox="0 0 12 17"><use href="#fold"/></svg>
<svg class="a" style="left:48px;top:539px;" width="11" height="15" viewBox="0 0 11 15"><path d="M0.5 0.5h7l3 3v11h-10z" fill="#fff" stroke="#7a7a7a"/><path d="M2 4.2l1.5-2 0.8 2h2" fill="none" stroke="#2a8be0" stroke-width="0.9"/><rect x="2" y="6" width="7" height="1" fill="#2a8be0"/><rect x="2" y="9" width="1.5" height="0.8" fill="#777"/><rect x="2" y="11" width="1.5" height="0.8" fill="#777"/><rect x="5" y="8.5" width="4" height="3.5" fill="#5a8f5a"/><rect x="5" y="8.5" width="4" height="1.5" fill="#7ab0e0"/></svg>
<div class="t" style="left:75.00px;top:575.00px;font-size:15px;color:#000;letter-spacing:0.066px;">Downloads</div>
<svg class="a" style="left:43px;top:567px;" width="12" height="17" viewBox="0 0 12 17"><use href="#fold"/></svg>
<svg class="a" style="left:49px;top:573px;" width="10" height="10" viewBox="0 0 10 10"><path d="M3 0h4v5h3L5 10 0 5h3z" fill="#3b8fe0"/></svg>
<div class="t" style="left:75.00px;top:605.00px;font-size:15px;color:#000;letter-spacing:-0.194px;">Musik</div>
<svg class="a" style="left:43px;top:597px;" width="12" height="17" viewBox="0 0 12 17"><use href="#fold"/></svg>
<svg class="a" style="left:48px;top:599px;" width="11" height="16" viewBox="0 0 11 16"><path d="M5.3 0.5v12" stroke="#1a8cf0" stroke-width="1.8"/><ellipse cx="3" cy="12.5" rx="3" ry="2.7" fill="#1a8cf0"/><path d="M5.3 1c0.8 3 4.5 4.5 4.5 8 0 1.5-0.5 2.5-1 3" fill="none" stroke="#1a8cf0" stroke-width="1.6"/></svg>
<div class="t" style="left:75.00px;top:635.00px;font-size:15px;color:#000;letter-spacing:-0.166px;">Videos</div>
<svg class="a" style="left:43px;top:627px;" width="12" height="17" viewBox="0 0 12 17"><use href="#fold"/></svg>
<svg class="a" style="left:48px;top:631px;" width="9" height="13" viewBox="0 0 9 13"><rect x="0" y="0" width="9" height="13" fill="#2b2b2b"/><rect x="2" y="1.2" width="5" height="4.8" fill="#6f8a9f"/><rect x="2" y="7" width="5" height="4.8" fill="#b07a3a"/><path d="M0.6 1v11M8.4 1v11" stroke="#ddd" stroke-width="0.6" stroke-dasharray="1 1"/></svg>
<div class="t" style="left:75.00px;top:665.00px;font-size:15px;color:#000;letter-spacing:-0.890px;">OS (C:)</div>
<svg class="a" style="left:50px;top:659px;" width="9" height="9" viewBox="0 0 9 9"><rect x="0" y="0.6" width="3.8" height="3.6" fill="#12b0f2"/><rect x="4.4" y="0" width="4.2" height="4.2" fill="#12b0f2"/><rect x="0" y="4.8" width="3.8" height="3.6" fill="#12b0f2"/><rect x="4.4" y="4.8" width="4.2" height="4.2" fill="#12b0f2"/></svg>
<svg class="a" style="left:51px;top:665px;" width="18" height="9" viewBox="0 0 18 9"><defs><linearGradient id="dtg" x1="0" y1="0" x2="1" y2="0"><stop offset="0" stop-color="#cfcfcf"/><stop offset="1" stop-color="#f0f0f0"/></linearGradient></defs><path d="M0 3.6L4.5 0.4H18V3.8L12.5 5.6H0z" fill="url(#dtg)"/><path d="M0 5.6H12.5V8.6L0 7.8z" fill="#3a3a3a"/><path d="M12.5 5.6L18 3.8V6.6L12.5 8.6z" fill="#b8b8b8"/><circle cx="7" cy="7.2" r="0.8" fill="#34c24a"/></svg>
<div class="t" style="left:75.00px;top:695.00px;font-size:15px;color:#000;letter-spacing:-0.182px;">DVD-RW-Laufwerk (D:)</div>
<svg class="a" style="left:57px;top:686px;" width="12" height="12" viewBox="0 0 12 12"><circle cx="6" cy="6" r="5.6" fill="#e2e2e2" stroke="#9a9a9a" stroke-width="0.8"/><circle cx="6" cy="6" r="3" fill="none" stroke="#c8c8c8" stroke-width="0.8"/><rect x="4.8" y="4.8" width="2.4" height="2.4" fill="#fff" stroke="#888" stroke-width="0.5"/></svg>
<svg class="a" style="left:51px;top:695px;" width="18" height="9" viewBox="0 0 18 9"><defs><linearGradient id="dtg" x1="0" y1="0" x2="1" y2="0"><stop offset="0" stop-color="#cfcfcf"/><stop offset="1" stop-color="#f0f0f0"/></linearGradient></defs><path d="M0 3.6L4.5 0.4H18V3.8L12.5 5.6H0z" fill="url(#dtg)"/><path d="M0 5.6H12.5V8.6L0 7.8z" fill="#3a3a3a"/><path d="M12.5 5.6L18 3.8V6.6L12.5 8.6z" fill="#b8b8b8"/><circle cx="7" cy="7.2" r="0.8" fill="#34c24a"/></svg>
<div class="t" style="left:75.00px;top:725.00px;font-size:15px;color:#000;letter-spacing:-0.599px;">DRIVE-N-GO (G:)</div>
<svg class="a" style="left:51px;top:725px;" width="18" height="9" viewBox="0 0 18 9"><defs><linearGradient id="dtg" x1="0" y1="0" x2="1" y2="0"><stop offset="0" stop-color="#cfcfcf"/><stop offset="1" stop-color="#f0f0f0"/></linearGradient></defs><path d="M0 3.6L4.5 0.4H18V3.8L12.5 5.6H0z" fill="url(#dtg)"/><path d="M0 5.6H12.5V8.6L0 7.8z" fill="#3a3a3a"/><path d="M12.5 5.6L18 3.8V6.6L12.5 8.6z" fill="#b8b8b8"/><circle cx="7" cy="7.2" r="0.8" fill="#34c24a"/></svg>
<div class="t" style="left:65.00px;top:755.00px;font-size:15px;color:#000;letter-spacing:0.081px;">Bibliotheken</div>
<svg class="a" style="left:41px;top:747px;" width="18" height="17" viewBox="0 0 18 17"><path d="M0 2Q0 0.3 1.5 0.3H6.5L8 1.8H16.5Q18 1.8 18 3.3V13.5Q18 15 16.5 15H1.5Q0 15 0 13.5z" fill="#fde38a"/><rect x="1.2" y="1.2" width="3.2" height="1" fill="#fff"/><path d="M3.5 16.2V10.3Q3.5 8.8 5 8.8H13Q14.5 8.8 14.5 10.3V16.2H11.7V11.6H6.3V16.2z" fill="#38b2ef"/></svg>
<div class="t" style="left:65.00px;top:785.00px;font-size:15px;color:#000;letter-spacing:-0.599px;">DRIVE-N-GO (G:)</div>
<svg class="a" style="left:51px;top:785px;" width="18" height="9" viewBox="0 0 18 9"><defs><linearGradient id="dtg" x1="0" y1="0" x2="1" y2="0"><stop offset="0" stop-color="#cfcfcf"/><stop offset="1" stop-color="#f0f0f0"/></linearGradient></defs><path d="M0 3.6L4.5 0.4H18V3.8L12.5 5.6H0z" fill="url(#dtg)"/><path d="M0 5.6H12.5V8.6L0 7.8z" fill="#3a3a3a"/><path d="M12.5 5.6L18 3.8V6.6L12.5 8.6z" fill="#b8b8b8"/><circle cx="7" cy="7.2" r="0.8" fill="#34c24a"/></svg>
</div>
<div class="a" style="left:449px;top:218px;width:20px;height:782px;background:#f0f0f0;"></div>
<div class="a" style="left:449px;top:239px;width:19px;height:627px;background:#cdcdcd;"></div>
<svg class="a" style="left:453px;top:224px;" width="11" height="8" viewBox="0 0 11 8"><path d="M1 6.5l4.5-4.5 4.5 4.5" fill="none" stroke="#505050" stroke-width="1.8"/></svg>
<svg class="a" style="left:453px;top:987px;" width="11" height="8" viewBox="0 0 11 8"><path d="M1 1.5l4.5 4.5 4.5-4.5" fill="none" stroke="#505050" stroke-width="1.8"/></svg>
<div class="a" style="left:471px;top:218px;width:1px;height:782px;background:#f2f2f2;"></div>
<div class="t" style="left:495.70px;top:234.00px;font-size:15px;color:#4c607a;letter-spacing:-0.253px;">Name</div>
<div class="t" style="left:821.40px;top:234.00px;font-size:15px;color:#4c607a;letter-spacing:-0.089px;">Änderungsdatum</div>
<div class="t" style="left:971.50px;top:234.00px;font-size:15px;color:#4c607a;letter-spacing:-0.059px;">Typ</div>
<div class="t" style="left:1121.00px;top:234.00px;font-size:15px;color:#4c607a;letter-spacing:-0.302px;">Größe</div>
<div class="a" style="left:813px;top:218px;width:1px;height:32px;background:#e5e5e5;"></div>
<div class="a" style="left:963px;top:218px;width:1px;height:32px;background:#e5e5e5;"></div>
<div class="a" style="left:1113px;top:218px;width:1px;height:32px;background:#e5e5e5;"></div>
<div class="a" style="left:1213px;top:218px;width:1px;height:32px;background:#e5e5e5;"></div>
<svg class="a" style="left:645px;top:218px;" width="11" height="7" viewBox="0 0 11 7"><path d="M1 5.5l4.5-4.5 4.5 4.5" fill="none" stroke="#555" stroke-width="1.1"/></svg>
<div class="a" style="left:472px;top:250px;width:1428px;height:750px;overflow:hidden">
<div class="a" style="left:20px;top:-5px;width:717px;height:27px;background:#cce8ff;box-sizing:border-box;border:1px solid #99d1ff"></div>
<svg class="a" style="left:28px;top:-2px;" width="14" height="18" viewBox="0 0 14 18"><use href="#doc"/></svg>
<div class="t" style="left:49.75px;top:8px;font-size:15px;color:#000;letter-spacing:0.213px">blocklist</div>
<div class="t" style="left:108.85px;top:8px;font-size:15px;color:#000;letter-spacing:-0.805px">(2016_10_23</div>
<div class="t" style="left:193.95px;top:8px;font-size:15px;color:#000;letter-spacing:-1.007px">13_26_09</div>
<div class="t" style="left:257.75px;top:8px;font-size:15px;color:#000;letter-spacing:-0.729px">UTC).xml</div>
<div class="t" style="left:348.65px;top:8px;font-size:15px;color:#6d6d6d;letter-spacing:-0.544px">23.10.2016</div>
<div class="t" style="left:422.85px;top:8px;font-size:15px;color:#6d6d6d;letter-spacing:-0.663px">16:13</div>
<div class="t" style="left:498.85px;top:8px;font-size:15px;color:#6d6d6d;letter-spacing:0.014px">XML-Dokument</div>
<div class="t" style="left:685.85px;top:8px;font-size:15px;color:#6d6d6d;letter-spacing:-0.625px">155</div>
<div class="t" style="left:713.85px;top:8px;font-size:15px;color:#6d6d6d;letter-spacing:-1.950px">KB</div>
<svg class="a" style="left:28px;top:25px;" width="14" height="18" viewBox="0 0 14 18"><use href="#doc"/></svg>
<div class="t" style="left:49.75px;top:35px;font-size:15px;color:#000;letter-spacing:0.213px">blocklist</div>
<div class="t" style="left:108.85px;top:35px;font-size:15px;color:#000;letter-spacing:-0.805px">(2016_10_24</div>
<div class="t" style="left:193.95px;top:35px;font-size:15px;color:#000;letter-spacing:-1.007px">20_04_45</div>
<div class="t" style="left:257.75px;top:35px;font-size:15px;color:#000;letter-spacing:-0.729px">UTC).xml</div>
<div class="t" style="left:348.65px;top:35px;font-size:15px;color:#6d6d6d;letter-spacing:-0.544px">24.10.2016</div>
<div class="t" style="left:422.85px;top:35px;font-size:15px;color:#6d6d6d;letter-spacing:-0.663px">22:53</div>
<div class="t" style="left:498.85px;top:35px;font-size:15px;color:#6d6d6d;letter-spacing:0.014px">XML-Dokument</div>
<div class="t" style="left:685.85px;top:35px;font-size:15px;color:#6d6d6d;letter-spacing:-0.625px">155</div>
<div class="t" style="left:713.85px;top:35px;font-size:15px;color:#6d6d6d;letter-spacing:-1.950px">KB</div>
<svg class="a" style="left:28px;top:52px;" width="14" height="18" viewBox="0 0 14 18"><use href="#doc"/></svg>
<div class="t" style="left:49.75px;top:62px;font-size:15px;color:#000;letter-spacing:0.213px">blocklist</div>
<div class="t" style="left:108.85px;top:62px;font-size:15px;color:#000;letter-spacing:-0.805px">(2016_10_26</div>
<div class="t" style="left:193.95px;top:62px;font-size:15px;color:#000;letter-spacing:-1.007px">12_23_41</div>
<div class="t" style="left:257.75px;top:62px;font-size:15px;color:#000;letter-spacing:-0.729px">UTC).xml</div>
<div class="t" style="left:348.65px;top:62px;font-size:15px;color:#6d6d6d;letter-spacing:-0.544px">25.10.2016</div>
<div class="t" style="left:422.85px;top:62px;font-size:15px;color:#6d6d6d;letter-spacing:-0.663px">22:53</div>
<div class="t" style="left:498.85px;top:62px;font-size:15px;color:#6d6d6d;letter-spacing:0.014px">XML-Dokument</div>
<div class="t" style="left:685.85px;top:62px;font-size:15px;color:#6d6d6d;letter-spacing:-0.625px">155</div>
<div class="t" style="left:713.85px;top:62px;font-size:15px;color:#6d6d6d;letter-spacing:-1.950px">KB</div>
<svg class="a" style="left:28px;top:79px;" width="14" height="18" viewBox="0 0 14 18"><use href="#doc"/></svg>
<div class="t" style="left:49.75px;top:89px;font-size:15px;color:#000;letter-spacing:0.213px">blocklist</div>
<div class="t" style="left:108.85px;top:89px;font-size:15px;color:#000;letter-spacing:-0.805px">(2016_10_28</div>
<div class="t" style="left:193.95px;top:89px;font-size:15px;color:#000;letter-spacing:-1.007px">18_20_26</div>
<div class="t" style="left:257.75px;top:89px;font-size:15px;color:#000;letter-spacing:-0.729px">UTC).xml</div>
<div class="t" style="left:348.65px;top:89px;font-size:15px;color:#6d6d6d;letter-spacing:-0.544px">28.10.2016</div>
<div class="t" style="left:422.85px;top:89px;font-size:15px;color:#6d6d6d;letter-spacing:-0.663px">21:18</div>
<div class="t" style="left:498.85px;top:89px;font-size:15px;color:#6d6d6d;letter-spacing:0.014px">XML-Dokument</div>
<div class="t" style="left:685.85px;top:89px;font-size:15px;color:#6d6d6d;letter-spacing:-0.625px">187</div>
<div class="t" style="left:713.85px;top:89px;font-size:15px;color:#6d6d6d;letter-spacing:-1.950px">KB</div>
<svg class="a" style="left:28px;top:106px;" width="14" height="18" viewBox="0 0 14 18"><use href="#doc"/></svg>
<div class="t" style="left:49.75px;top:116px;font-size:15px;color:#000;letter-spacing:0.213px">blocklist</div>
<div class="t" style="left:108.85px;top:116px;font-size:15px;color:#000;letter-spacing:-0.805px">(2016_10_30</div>
<div class="t" style="left:193.95px;top:116px;font-size:15px;color:#000;letter-spacing:-1.007px">15_30_33</div>
<div class="t" style="left:257.75px;top:116px;font-size:15px;color:#000;letter-spacing:-0.729px">UTC).xml</div>
<div class="t" style="left:348.65px;top:116px;font-size:15px;color:#6d6d6d;letter-spacing:-0.544px">30.10.2016</div>
<div class="t" style="left:422.85px;top:116px;font-size:15px;color:#6d6d6d;letter-spacing:-0.663px">16:28</div>
<div class="t" style="left:498.85px;top:116px;font-size:15px;color:#6d6d6d;letter-spacing:0.014px">XML-Dokument</div>
<div class="t" style="left:685.85px;top:116px;font-size:15px;color:#6d6d6d;letter-spacing:-0.625px">187</div>
<div class="t" style="left:713.85px;top:116px;font-size:15px;color:#6d6d6d;letter-spacing:-1.950px">KB</div>
<svg class="a" style="left:28px;top:133px;" width="14" height="18" viewBox="0 0 14 18"><use href="#doc"/></svg>
<div class="t" style="left:49.75px;top:143px;font-size:15px;color:#000;letter-spacing:0.213px">blocklist</div>
<div class="t" style="left:108.85px;top:143px;font-size:15px;color:#000;letter-spacing:-0.805px">(2016_10_31</div>
<div class="t" style="left:193.95px;top:143px;font-size:15px;color:#000;letter-spacing:-1.007px">18_54_38</div>
<div class="t" style="left:257.75px;top:143px;font-size:15px;color:#000;letter-spacing:-0.729px">UTC).xml</div>
<div class="t" style="left:348.65px;top:143px;font-size:15px;color:#6d6d6d;letter-spacing:-0.544px">31.10.2016</div>
<div class="t" style="left:422.85px;top:143px;font-size:15px;color:#6d6d6d;letter-spacing:-0.663px">19:50</div>
<div class="t" style="left:498.85px;top:143px;font-size:15px;color:#6d6d6d;letter-spacing:0.014px">XML-Dokument</div>
<div class="t" style="left:685.85px;top:143px;font-size:15px;color:#6d6d6d;letter-spacing:-0.625px">188</div>
<div class="t" style="left:713.85px;top:143px;font-size:15px;color:#6d6d6d;letter-spacing:-1.950px">KB</div>
<svg class="a" style="left:28px;top:160px;" width="14" height="18" viewBox="0 0 14 18"><use href="#doc"/></svg>
<div class="t" style="left:49.75px;top:170px;font-size:15px;color:#000;letter-spacing:0.213px">blocklist</div>
<div class="t" style="left:108.85px;top:170px;font-size:15px;color:#000;letter-spacing:-0.805px">(2016_11_02</div>
<div class="t" style="left:193.95px;top:170px;font-size:15px;color:#000;letter-spacing:-1.007px">13_10_53</div>
<div class="t" style="left:257.75px;top:170px;font-size:15px;color:#000;letter-spacing:-0.729px">UTC).xml</div>
<div class="t" style="left:348.65px;top:170px;font-size:15px;color:#6d6d6d;letter-spacing:-0.544px">02.11.2016</div>
<div class="t" style="left:422.85px;top:170px;font-size:15px;color:#6d6d6d;letter-spacing:-0.663px">14:09</div>
<div class="t" style="left:498.85px;top:170px;font-size:15px;color:#6d6d6d;letter-spacing:0.014px">XML-Dokument</div>
<div class="t" style="left:685.85px;top:170px;font-size:15px;color:#6d6d6d;letter-spacing:-0.625px">188</div>
<div class="t" style="left:713.85px;top:170px;font-size:15px;color:#6d6d6d;letter-spacing:-1.950px">KB</div>
<svg class="a" style="left:28px;top:187px;" width="14" height="18" viewBox="0 0 14 18"><use href="#doc"/></svg>
<div class="t" style="left:49.75px;top:197px;font-size:15px;color:#000;letter-spacing:0.213px">blocklist</div>
<div class="t" style="left:108.85px;top:197px;font-size:15px;color:#000;letter-spacing:-0.805px">(2016_11_12</div>
<div class="t" style="left:193.95px;top:197px;font-size:15px;color:#000;letter-spacing:-1.007px">19_41_59</div>
<div class="t" style="left:257.75px;top:197px;font-size:15px;color:#000;letter-spacing:-0.729px">UTC).xml</div>
<div class="t" style="left:348.65px;top:197px;font-size:15px;color:#6d6d6d;letter-spacing:-0.544px">12.11.2016</div>
<div class="t" style="left:422.85px;top:197px;font-size:15px;color:#6d6d6d;letter-spacing:-0.663px">12:48</div>
<div class="t" style="left:498.85px;top:197px;font-size:15px;color:#6d6d6d;letter-spacing:0.014px">XML-Dokument</div>
<div class="t" style="left:685.85px;top:197px;font-size:15px;color:#6d6d6d;letter-spacing:-0.625px">188</div>
<div class="t" style="left:713.85px;top:197px;font-size:15px;color:#6d6d6d;letter-spacing:-1.950px">KB</div>
<svg class="a" style="left:28px;top:214px;" width="14" height="18" viewBox="0 0 14 18"><use href="#doc"/></svg>
<div class="t" style="left:49.75px;top:224px;font-size:15px;color:#000;letter-spacing:0.213px">blocklist</div>
<div class="t" style="left:108.85px;top:224px;font-size:15px;color:#000;letter-spacing:-0.805px">(2016_11_16</div>
<div class="t" style="left:193.95px;top:224px;font-size:15px;color:#000;letter-spacing:-1.007px">15_44_31</div>
<div class="t" style="left:257.75px;top:224px;font-size:15px;color:#000;letter-spacing:-0.729px">UTC).xml</div>
<div class="t" style="left:348.65px;top:224px;font-size:15px;color:#6d6d6d;letter-spacing:-0.544px">16.11.2016</div>
<div class="t" style="left:422.85px;top:224px;font-size:15px;color:#6d6d6d;letter-spacing:-0.663px">14:50</div>
<div class="t" style="left:498.85px;top:224px;font-size:15px;color:#6d6d6d;letter-spacing:0.014px">XML-Dokument</div>
<div class="t" style="left:685.85px;top:224px;font-size:15px;color:#6d6d6d;letter-spacing:-0.625px">188</div>
<div class="t" style="left:713.85px;top:224px;font-size:15px;color:#6d6d6d;letter-spacing:-1.950px">KB</div>
<svg class="a" style="left:28px;top:241px;" width="14" height="18" viewBox="0 0 14 18"><use href="#doc"/></svg>
<div class="t" style="left:49.75px;top:251px;font-size:15px;color:#000;letter-spacing:0.213px">blocklist</div>
<div class="t" style="left:108.85px;top:251px;font-size:15px;color:#000;letter-spacing:-0.805px">(2016_11_27</div>
<div class="t" style="left:193.95px;top:251px;font-size:15px;color:#000;letter-spacing:-1.007px">13_36_01</div>
<div class="t" style="left:257.75px;top:251px;font-size:15px;color:#000;letter-spacing:-0.729px">UTC).xml</div>
<div class="t" style="left:348.65px;top:251px;font-size:15px;color:#6d6d6d;letter-spacing:-0.544px">27.11.2016</div>
<div class="t" style="left:422.85px;top:251px;font-size:15px;color:#6d6d6d;letter-spacing:-0.663px">13:30</div>
<div class="t" style="left:498.85px;top:251px;font-size:15px;color:#6d6d6d;letter-spacing:0.014px">XML-Dokument</div>
<div class="t" style="left:685.85px;top:251px;font-size:15px;color:#6d6d6d;letter-spacing:-0.625px">188</div>
<div class="t" style="left:713.85px;top:251px;font-size:15px;color:#6d6d6d;letter-spacing:-1.950px">KB</div>
<svg class="a" style="left:28px;top:268px;" width="14" height="18" viewBox="0 0 14 18"><use href="#doc"/></svg>
<div class="t" style="left:49.75px;top:278px;font-size:15px;color:#000;letter-spacing:0.213px">blocklist</div>
<div class="t" style="left:108.85px;top:278px;font-size:15px;color:#000;letter-spacing:-0.805px">(2016_12_03</div>
<div class="t" style="left:193.95px;top:278px;font-size:15px;color:#000;letter-spacing:-1.007px">16_00_35</div>
<div class="t" style="left:257.75px;top:278px;font-size:15px;color:#000;letter-spacing:-0.729px">UTC).xml</div>
<div class="t" style="left:348.65px;top:278px;font-size:15px;color:#6d6d6d;letter-spacing:-0.544px">02.12.2016</div>
<div class="t" style="left:422.85px;top:278px;font-size:15px;color:#6d6d6d;letter-spacing:-0.663px">19:26</div>
<div class="t" style="left:498.85px;top:278px;font-size:15px;color:#6d6d6d;letter-spacing:0.014px">XML-Dokument</div>
<div class="t" style="left:685.85px;top:278px;font-size:15px;color:#6d6d6d;letter-spacing:-0.625px">188</div>
<div class="t" style="left:713.85px;top:278px;font-size:15px;color:#6d6d6d;letter-spacing:-1.950px">KB</div>
<svg class="a" style="left:28px;top:295px;" width="14" height="18" viewBox="0 0 14 18"><use href="#doc"/></svg>
<div class="t" style="left:49.75px;top:305px;font-size:15px;color:#000;letter-spacing:0.213px">blocklist</div>
<div class="t" style="left:108.85px;top:305px;font-size:15px;color:#000;letter-spacing:-0.805px">(2016_12_04</div>
<div class="t" style="left:193.95px;top:305px;font-size:15px;color:#000;letter-spacing:-1.007px">18_10_46</div>
<div class="t" style="left:257.75px;top:305px;font-size:15px;color:#000;letter-spacing:-0.729px">UTC).xml</div>
<div class="t" style="left:348.65px;top:305px;font-size:15px;color:#6d6d6d;letter-spacing:-0.544px">04.12.2016</div>
<div class="t" style="left:422.85px;top:305px;font-size:15px;color:#6d6d6d;letter-spacing:-0.663px">18:41</div>
<div class="t" style="left:498.85px;top:305px;font-size:15px;color:#6d6d6d;letter-spacing:0.014px">XML-Dokument</div>
<div class="t" style="left:685.85px;top:305px;font-size:15px;color:#6d6d6d;letter-spacing:-0.625px">188</div>
<div class="t" style="left:713.85px;top:305px;font-size:15px;color:#6d6d6d;letter-spacing:-1.950px">KB</div>
<svg class="a" style="left:28px;top:322px;" width="14" height="18" viewBox="0 0 14 18"><use href="#doc"/></svg>
<div class="t" style="left:49.75px;top:332px;font-size:15px;color:#000;letter-spacing:0.213px">blocklist</div>
<div class="t" style="left:108.85px;top:332px;font-size:15px;color:#000;letter-spacing:-0.805px">(2016_12_10</div>
<div class="t" style="left:193.95px;top:332px;font-size:15px;color:#000;letter-spacing:-1.007px">13_02_33</div>
<div class="t" style="left:257.75px;top:332px;font-size:15px;color:#000;letter-spacing:-0.729px">UTC).xml</div>
<div class="t" style="left:348.65px;top:332px;font-size:15px;color:#6d6d6d;letter-spacing:-0.544px">10.12.2016</div>
<div class="t" style="left:422.85px;top:332px;font-size:15px;color:#6d6d6d;letter-spacing:-0.663px">13:53</div>
<div class="t" style="left:498.85px;top:332px;font-size:15px;color:#6d6d6d;letter-spacing:0.014px">XML-Dokument</div>
<div class="t" style="left:685.85px;top:332px;font-size:15px;color:#6d6d6d;letter-spacing:-0.625px">188</div>
<div class="t" style="left:713.85px;top:332px;font-size:15px;color:#6d6d6d;letter-spacing:-1.950px">KB</div>
<svg class="a" style="left:28px;top:349px;" width="14" height="18" viewBox="0 0 14 18"><use href="#doc"/></svg>
<div class="t" style="left:49.75px;top:359px;font-size:15px;color:#000;letter-spacing:0.213px">blocklist</div>
<div class="t" style="left:108.85px;top:359px;font-size:15px;color:#000;letter-spacing:-0.805px">(2016_12_21</div>
<div class="t" style="left:193.95px;top:359px;font-size:15px;color:#000;letter-spacing:-1.007px">16_24_27</div>
<div class="t" style="left:257.75px;top:359px;font-size:15px;color:#000;letter-spacing:-0.729px">UTC).xml</div>
<div class="t" style="left:348.65px;top:359px;font-size:15px;color:#6d6d6d;letter-spacing:-0.544px">21.12.2016</div>
<div class="t" style="left:422.85px;top:359px;font-size:15px;color:#6d6d6d;letter-spacing:-0.663px">17:23</div>
<div class="t" style="left:498.85px;top:359px;font-size:15px;color:#6d6d6d;letter-spacing:0.014px">XML-Dokument</div>
<div class="t" style="left:685.85px;top:359px;font-size:15px;color:#6d6d6d;letter-spacing:-0.625px">189</div>
<div class="t" style="left:713.85px;top:359px;font-size:15px;color:#6d6d6d;letter-spacing:-1.950px">KB</div>
<svg class="a" style="left:28px;top:376px;" width="14" height="18" viewBox="0 0 14 18"><use href="#doc"/></svg>
<div class="t" style="left:49.75px;top:386px;font-size:15px;color:#000;letter-spacing:0.213px">blocklist</div>
<div class="t" style="left:108.85px;top:386px;font-size:15px;color:#000;letter-spacing:-0.805px">(2016_12_23</div>
<div class="t" style="left:193.95px;top:386px;font-size:15px;color:#000;letter-spacing:-1.007px">12_23_04</div>
<div class="t" style="left:257.75px;top:386px;font-size:15px;color:#000;letter-spacing:-0.729px">UTC).xml</div>
<div class="t" style="left:348.65px;top:386px;font-size:15px;color:#6d6d6d;letter-spacing:-0.544px">23.12.2016</div>
<div class="t" style="left:422.85px;top:386px;font-size:15px;color:#6d6d6d;letter-spacing:-0.663px">12:17</div>
<div class="t" style="left:498.85px;top:386px;font-size:15px;color:#6d6d6d;letter-spacing:0.014px">XML-Dokument</div>
<div class="t" style="left:685.85px;top:386px;font-size:15px;color:#6d6d6d;letter-spacing:-0.625px">189</div>
<div class="t" style="left:713.85px;top:386px;font-size:15px;color:#6d6d6d;letter-spacing:-1.950px">KB</div>
<svg class="a" style="left:28px;top:403px;" width="14" height="18" viewBox="0 0 14 18"><use href="#doc"/></svg>
<div class="t" style="left:49.75px;top:413px;font-size:15px;color:#000;letter-spacing:0.213px">blocklist</div>
<div class="t" style="left:108.85px;top:413px;font-size:15px;color:#000;letter-spacing:-0.805px">(2016_12_26</div>
<div class="t" style="left:193.95px;top:413px;font-size:15px;color:#000;letter-spacing:-1.007px">10_43_28</div>
<div class="t" style="left:257.75px;top:413px;font-size:15px;color:#000;letter-spacing:-0.729px">UTC).xml</div>
<div class="t" style="left:348.65px;top:413px;font-size:15px;color:#6d6d6d;letter-spacing:-0.544px">25.12.2016</div>
<div class="t" style="left:422.85px;top:413px;font-size:15px;color:#6d6d6d;letter-spacing:-0.663px">17:19</div>
<div class="t" style="left:498.85px;top:413px;font-size:15px;color:#6d6d6d;letter-spacing:0.014px">XML-Dokument</div>
<div class="t" style="left:685.85px;top:413px;font-size:15px;color:#6d6d6d;letter-spacing:-0.625px">189</div>
<div class="t" style="left:713.85px;top:413px;font-size:15px;color:#6d6d6d;letter-spacing:-1.950px">KB</div>
<svg class="a" style="left:28px;top:430px;" width="14" height="18" viewBox="0 0 14 18"><use href="#doc"/></svg>
<div class="t" style="left:49.75px;top:440px;font-size:15px;color:#000;letter-spacing:0.213px">blocklist</div>
<div class="t" style="left:108.85px;top:440px;font-size:15px;color:#000;letter-spacing:-0.805px">(2016_12_28</div>
<div class="t" style="left:193.95px;top:440px;font-size:15px;color:#000;letter-spacing:-1.007px">20_43_33</div>
<div class="t" style="left:257.75px;top:440px;font-size:15px;color:#000;letter-spacing:-0.729px">UTC).xml</div>
<div class="t" style="left:348.65px;top:440px;font-size:15px;color:#6d6d6d;letter-spacing:-0.544px">28.12.2016</div>
<div class="t" style="left:422.85px;top:440px;font-size:15px;color:#6d6d6d;letter-spacing:-0.663px">19:03</div>
<div class="t" style="left:498.85px;top:440px;font-size:15px;color:#6d6d6d;letter-spacing:0.014px">XML-Dokument</div>
<div class="t" style="left:685.85px;top:440px;font-size:15px;color:#6d6d6d;letter-spacing:-0.625px">189</div>
<div class="t" style="left:713.85px;top:440px;font-size:15px;color:#6d6d6d;letter-spacing:-1.950px">KB</div>
<svg class="a" style="left:28px;top:457px;" width="14" height="18" viewBox="0 0 14 18"><use href="#doc"/></svg>
<div class="t" style="left:49.75px;top:467px;font-size:15px;color:#000;letter-spacing:0.213px">blocklist</div>
<div class="t" style="left:108.85px;top:467px;font-size:15px;color:#000;letter-spacing:-0.805px">(2016_12_31</div>
<div class="t" style="left:193.95px;top:467px;font-size:15px;color:#000;letter-spacing:-1.007px">18_29_32</div>
<div class="t" style="left:257.75px;top:467px;font-size:15px;color:#000;letter-spacing:-0.729px">UTC).xml</div>
<div class="t" style="left:348.65px;top:467px;font-size:15px;color:#6d6d6d;letter-spacing:-0.544px">31.12.2016</div>
<div class="t" style="left:422.85px;top:467px;font-size:15px;color:#6d6d6d;letter-spacing:-0.663px">18:30</div>
<div class="t" style="left:498.85px;top:467px;font-size:15px;color:#6d6d6d;letter-spacing:0.014px">XML-Dokument</div>
<div class="t" style="left:685.85px;top:467px;font-size:15px;color:#6d6d6d;letter-spacing:-0.625px">190</div>
<div class="t" style="left:713.85px;top:467px;font-size:15px;color:#6d6d6d;letter-spacing:-1.950px">KB</div>
<svg class="a" style="left:28px;top:484px;" width="14" height="18" viewBox="0 0 14 18"><use href="#doc"/></svg>
<div class="t" style="left:49.75px;top:494px;font-size:15px;color:#000;letter-spacing:0.213px">blocklist</div>
<div class="t" style="left:108.85px;top:494px;font-size:15px;color:#000;letter-spacing:-0.805px">(2017_01_02</div>
<div class="t" style="left:193.95px;top:494px;font-size:15px;color:#000;letter-spacing:-1.007px">11_32_51</div>
<div class="t" style="left:257.75px;top:494px;font-size:15px;color:#000;letter-spacing:-0.729px">UTC).xml</div>
<div class="t" style="left:348.65px;top:494px;font-size:15px;color:#6d6d6d;letter-spacing:-0.544px">01.01.2017</div>
<div class="t" style="left:422.85px;top:494px;font-size:15px;color:#6d6d6d;letter-spacing:-0.663px">19:13</div>
<div class="t" style="left:498.85px;top:494px;font-size:15px;color:#6d6d6d;letter-spacing:0.014px">XML-Dokument</div>
<div class="t" style="left:685.85px;top:494px;font-size:15px;color:#6d6d6d;letter-spacing:-0.625px">190</div>
<div class="t" style="left:713.85px;top:494px;font-size:15px;color:#6d6d6d;letter-spacing:-1.950px">KB</div>
<div class="a" style="left:20px;top:507px;width:717px;height:28px;background:#e5f3ff;"></div>
<svg class="a" style="left:28px;top:511px;" width="14" height="18" viewBox="0 0 14 18"><use href="#doc"/></svg>
<div class="t" style="left:49.75px;top:521px;font-size:15px;color:#000;letter-spacing:0.213px">blocklist</div>
<div class="t" style="left:108.85px;top:521px;font-size:15px;color:#000;letter-spacing:-0.805px">(2017_01_02</div>
<div class="t" style="left:193.95px;top:521px;font-size:15px;color:#000;letter-spacing:-1.007px">18_31_17</div>
<div class="t" style="left:257.75px;top:521px;font-size:15px;color:#000;letter-spacing:-0.729px">UTC).xml</div>
<div class="t" style="left:348.65px;top:521px;font-size:15px;color:#6d6d6d;letter-spacing:-0.544px">02.01.2017</div>
<div class="t" style="left:422.85px;top:521px;font-size:15px;color:#6d6d6d;letter-spacing:-0.663px">19:13</div>
<div class="t" style="left:498.85px;top:521px;font-size:15px;color:#6d6d6d;letter-spacing:0.014px">XML-Dokument</div>
<div class="t" style="left:685.85px;top:521px;font-size:15px;color:#6d6d6d;letter-spacing:-0.625px">190</div>
<div class="t" style="left:713.85px;top:521px;font-size:15px;color:#6d6d6d;letter-spacing:-1.950px">KB</div>
<svg class="a" style="left:28px;top:538px;" width="14" height="18" viewBox="0 0 14 18"><use href="#doc"/></svg>
<div class="t" style="left:49.75px;top:548px;font-size:15px;color:#000;letter-spacing:0.213px">blocklist</div>
<div class="t" style="left:108.85px;top:548px;font-size:15px;color:#000;letter-spacing:-0.805px">(2017_01_04</div>
<div class="t" style="left:193.95px;top:548px;font-size:15px;color:#000;letter-spacing:-1.007px">12_15_55</div>
<div class="t" style="left:257.75px;top:548px;font-size:15px;color:#000;letter-spacing:-0.729px">UTC).xml</div>
<div class="t" style="left:348.65px;top:548px;font-size:15px;color:#6d6d6d;letter-spacing:-0.544px">04.01.2017</div>
<div class="t" style="left:422.85px;top:548px;font-size:15px;color:#6d6d6d;letter-spacing:-0.663px">12:57</div>
<div class="t" style="left:498.85px;top:548px;font-size:15px;color:#6d6d6d;letter-spacing:0.014px">XML-Dokument</div>
<div class="t" style="left:685.85px;top:548px;font-size:15px;color:#6d6d6d;letter-spacing:-0.625px">204</div>
<div class="t" style="left:713.85px;top:548px;font-size:15px;color:#6d6d6d;letter-spacing:-1.950px">KB</div>
<svg class="a" style="left:28px;top:565px;" width="14" height="18" viewBox="0 0 14 18"><use href="#doc"/></svg>
<div class="t" style="left:49.75px;top:575px;font-size:15px;color:#000;letter-spacing:0.213px">blocklist</div>
<div class="t" style="left:108.85px;top:575px;font-size:15px;color:#000;letter-spacing:-0.805px">(2017_01_06</div>
<div class="t" style="left:193.95px;top:575px;font-size:15px;color:#000;letter-spacing:-1.007px">08_38_58</div>
<div class="t" style="left:257.75px;top:575px;font-size:15px;color:#000;letter-spacing:-0.729px">UTC).xml</div>
<div class="t" style="left:348.65px;top:575px;font-size:15px;color:#6d6d6d;letter-spacing:-0.544px">05.01.2017</div>
<div class="t" style="left:422.85px;top:575px;font-size:15px;color:#6d6d6d;letter-spacing:-0.663px">12:59</div>
<div class="t" style="left:498.85px;top:575px;font-size:15px;color:#6d6d6d;letter-spacing:0.014px">XML-Dokument</div>
<div class="t" style="left:685.85px;top:575px;font-size:15px;color:#6d6d6d;letter-spacing:-0.625px">204</div>
<div class="t" style="left:713.85px;top:575px;font-size:15px;color:#6d6d6d;letter-spacing:-1.950px">KB</div>
<svg class="a" style="left:28px;top:592px;" width="14" height="18" viewBox="0 0 14 18"><use href="#doc"/></svg>
<div class="t" style="left:49.75px;top:602px;font-size:15px;color:#000;letter-spacing:0.213px">blocklist</div>
<div class="t" style="left:108.85px;top:602px;font-size:15px;color:#000;letter-spacing:-0.805px">(2017_01_06</div>
<div class="t" style="left:193.95px;top:602px;font-size:15px;color:#000;letter-spacing:-1.007px">13_21_09</div>
<div class="t" style="left:257.75px;top:602px;font-size:15px;color:#000;letter-spacing:-0.729px">UTC).xml</div>
<div class="t" style="left:348.65px;top:602px;font-size:15px;color:#6d6d6d;letter-spacing:-0.544px">06.01.2017</div>
<div class="t" style="left:422.85px;top:602px;font-size:15px;color:#6d6d6d;letter-spacing:-0.663px">14:15</div>
<div class="t" style="left:498.85px;top:602px;font-size:15px;color:#6d6d6d;letter-spacing:0.014px">XML-Dokument</div>
<div class="t" style="left:685.85px;top:602px;font-size:15px;color:#6d6d6d;letter-spacing:-0.625px">204</div>
<div class="t" style="left:713.85px;top:602px;font-size:15px;color:#6d6d6d;letter-spacing:-1.950px">KB</div>
<svg class="a" style="left:28px;top:619px;" width="14" height="18" viewBox="0 0 14 18"><use href="#doc"/></svg>
<div class="t" style="left:49.75px;top:629px;font-size:15px;color:#000;letter-spacing:0.213px">blocklist</div>
<div class="t" style="left:108.85px;top:629px;font-size:15px;color:#000;letter-spacing:-0.805px">(2017_01_08</div>
<div class="t" style="left:193.95px;top:629px;font-size:15px;color:#000;letter-spacing:-1.007px">11_29_02</div>
<div class="t" style="left:257.75px;top:629px;font-size:15px;color:#000;letter-spacing:-0.729px">UTC).xml</div>
<div class="t" style="left:348.65px;top:629px;font-size:15px;color:#6d6d6d;letter-spacing:-0.544px">07.01.2017</div>
<div class="t" style="left:422.85px;top:629px;font-size:15px;color:#6d6d6d;letter-spacing:-0.663px">19:10</div>
<div class="t" style="left:498.85px;top:629px;font-size:15px;color:#6d6d6d;letter-spacing:0.014px">XML-Dokument</div>
<div class="t" style="left:685.85px;top:629px;font-size:15px;color:#6d6d6d;letter-spacing:-0.625px">204</div>
<div class="t" style="left:713.85px;top:629px;font-size:15px;color:#6d6d6d;letter-spacing:-1.950px">KB</div>
<svg class="a" style="left:28px;top:646px;" width="14" height="18" viewBox="0 0 14 18"><use href="#doc"/></svg>
<div class="t" style="left:49.75px;top:656px;font-size:15px;color:#000;letter-spacing:0.213px">blocklist</div>
<div class="t" style="left:108.85px;top:656px;font-size:15px;color:#000;letter-spacing:-0.805px">(2017_01_08</div>
<div class="t" style="left:193.95px;top:656px;font-size:15px;color:#000;letter-spacing:-1.007px">18_30_56</div>
<div class="t" style="left:257.75px;top:656px;font-size:15px;color:#000;letter-spacing:-0.729px">UTC).xml</div>
<div class="t" style="left:348.65px;top:656px;font-size:15px;color:#6d6d6d;letter-spacing:-0.544px">08.01.2017</div>
<div class="t" style="left:422.85px;top:656px;font-size:15px;color:#6d6d6d;letter-spacing:-0.663px">19:10</div>
<div class="t" style="left:498.85px;top:656px;font-size:15px;color:#6d6d6d;letter-spacing:0.014px">XML-Dokument</div>
<div class="t" style="left:685.85px;top:656px;font-size:15px;color:#6d6d6d;letter-spacing:-0.625px">204</div>
<div class="t" style="left:713.85px;top:656px;font-size:15px;color:#6d6d6d;letter-spacing:-1.950px">KB</div>
<svg class="a" style="left:28px;top:673px;" width="14" height="18" viewBox="0 0 14 18"><use href="#doc"/></svg>
<div class="t" style="left:49.75px;top:683px;font-size:15px;color:#000;letter-spacing:0.213px">blocklist</div>
<div class="t" style="left:108.85px;top:683px;font-size:15px;color:#000;letter-spacing:-0.805px">(2017_01_10</div>
<div class="t" style="left:193.95px;top:683px;font-size:15px;color:#000;letter-spacing:-1.007px">18_03_43</div>
<div class="t" style="left:257.75px;top:683px;font-size:15px;color:#000;letter-spacing:-0.729px">UTC).xml</div>
<div class="t" style="left:348.65px;top:683px;font-size:15px;color:#6d6d6d;letter-spacing:-0.544px">09.01.2017</div>
<div class="t" style="left:422.85px;top:683px;font-size:15px;color:#6d6d6d;letter-spacing:-0.663px">19:21</div>
<div class="t" style="left:498.85px;top:683px;font-size:15px;color:#6d6d6d;letter-spacing:0.014px">XML-Dokument</div>
<div class="t" style="left:685.85px;top:683px;font-size:15px;color:#6d6d6d;letter-spacing:-0.625px">204</div>
<div class="t" style="left:713.85px;top:683px;font-size:15px;color:#6d6d6d;letter-spacing:-1.950px">KB</div>
<svg class="a" style="left:28px;top:700px;" width="14" height="18" viewBox="0 0 14 18"><use href="#doc"/></svg>
<div class="t" style="left:49.75px;top:710px;font-size:15px;color:#000;letter-spacing:0.213px">blocklist</div>
<div class="t" style="left:108.85px;top:710px;font-size:15px;color:#000;letter-spacing:-0.805px">(2017_01_11</div>
<div class="t" style="left:193.95px;top:710px;font-size:15px;color:#000;letter-spacing:-1.007px">13_22_26</div>
<div class="t" style="left:257.75px;top:710px;font-size:15px;color:#000;letter-spacing:-0.729px">UTC).xml</div>
<div class="t" style="left:348.65px;top:710px;font-size:15px;color:#6d6d6d;letter-spacing:-0.544px">10.01.2017</div>
<div class="t" style="left:422.85px;top:710px;font-size:15px;color:#6d6d6d;letter-spacing:-0.663px">19:21</div>
<div class="t" style="left:498.85px;top:710px;font-size:15px;color:#6d6d6d;letter-spacing:0.014px">XML-Dokument</div>
<div class="t" style="left:685.85px;top:710px;font-size:15px;color:#6d6d6d;letter-spacing:-0.625px">204</div>
<div class="t" style="left:713.85px;top:710px;font-size:15px;color:#6d6d6d;letter-spacing:-1.950px">KB</div>
<svg class="a" style="left:28px;top:727px;" width="14" height="18" viewBox="0 0 14 18"><use href="#doc"/></svg>
<div class="t" style="left:49.75px;top:737px;font-size:15px;color:#000;letter-spacing:0.213px">blocklist</div>
<div class="t" style="left:108.85px;top:737px;font-size:15px;color:#000;letter-spacing:-0.805px">(2017_01_12</div>
<div class="t" style="left:193.95px;top:737px;font-size:15px;color:#000;letter-spacing:-1.007px">19_40_57</div>
<div class="t" style="left:257.75px;top:737px;font-size:15px;color:#000;letter-spacing:-0.729px">UTC).xml</div>
<div class="t" style="left:348.65px;top:737px;font-size:15px;color:#6d6d6d;letter-spacing:-0.544px">12.01.2017</div>
<div class="t" style="left:422.85px;top:737px;font-size:15px;color:#6d6d6d;letter-spacing:-0.663px">19:42</div>
<div class="t" style="left:498.85px;top:737px;font-size:15px;color:#6d6d6d;letter-spacing:0.014px">XML-Dokument</div>
<div class="t" style="left:685.85px;top:737px;font-size:15px;color:#6d6d6d;letter-spacing:-0.625px">204</div>
<div class="t" style="left:713.85px;top:737px;font-size:15px;color:#6d6d6d;letter-spacing:-1.950px">KB</div>
</div>
<div class="a" style="left:1900px;top:218px;width:20px;height:782px;background:#f0f0f0;"></div>
<div class="a" style="left:1900px;top:275px;width:19px;height:21px;background:#cdcdcd;"></div>
<svg class="a" style="left:1904px;top:224px;" width="11" height="8" viewBox="0 0 11 8"><path d="M1 6.5l4.5-4.5 4.5 4.5" fill="none" stroke="#505050" stroke-width="1.8"/></svg>
<div class="t" style="left:17.40px;top:1015.00px;font-size:15px;color:#1e2f45;letter-spacing:-0.298px;">2 275 Elemente</div>
<div class="a" style="left:131px;top:1008px;width:1px;height:15px;background:#f0f0f0;"></div>
<div class="t" style="left:145.50px;top:1015.00px;font-size:15px;color:#1e2f45;letter-spacing:-0.281px;">1 Element ausgewählt (154 KB)</div>
<div class="a" style="left:362px;top:1008px;width:1px;height:15px;background:#f0f0f0;"></div>
<div class="a" style="left:1859px;top:1001px;width:28px;height:29px;background:#cde8f6;box-sizing:border-box;border:1px solid #26a0da"></div>
<svg class="a" style="left:1864px;top:1007px;" width="20" height="18" viewBox="0 0 20 18"><rect x="1.5" y="1.5" width="5" height="15" fill="#fff" stroke="#8c8c8c"/><path d="M1.5 6.5h5M1.5 11.5h5" stroke="#8c8c8c"/><rect x="3" y="3" width="2" height="2" fill="#3a7a5a"/><rect x="3" y="8" width="2" height="2" fill="#d0a030"/><rect x="3" y="13" width="2" height="2" fill="#c8281e"/><path d="M8 3.5h3M12 3.5h5M8 8.5h3M12 8.5h5M8 13.5h3M12 13.5h5" stroke="#6a6a6a" stroke-width="1"/></svg>
<svg class="a" style="left:1892px;top:1008px;" width="18" height="14" viewBox="0 0 18 14"><defs><linearGradient id="lig" x1="0" y1="0" x2="0" y2="1"><stop offset="0" stop-color="#5a9ef0"/><stop offset="0.4" stop-color="#d8e8f8"/><stop offset="1" stop-color="#3a70b0"/></linearGradient></defs><rect x="0.5" y="0.5" width="17" height="13" fill="#fff" stroke="#999"/><rect x="2" y="2" width="14" height="10" fill="url(#lig)"/><path d="M2 6.5c3 0.5 6 2 14 4V9H2z" fill="#3f7a4a"/></svg>
<div class="a" style="left:1609px;top:876px;width:311px;height:124px;background:#1f1f1f;box-shadow:inset 1px 1px 0 #2f2f2f"></div>
<svg class="a" style="left:1615px;top:890px;" width="80" height="55" viewBox="0 0 80 55"><g fill="#fff"><circle cx="19.3" cy="37.4" r="7.9"/><circle cx="27.5" cy="28" r="8.5"/><circle cx="42.3" cy="25.5" r="11.5"/><rect x="19.3" y="28" width="26" height="17.3"/></g><g fill="#1f1f1f"><circle cx="42" cy="36" r="14"/><circle cx="54" cy="38" r="12"/><circle cx="61.5" cy="43" r="7.8"/><circle cx="30.5" cy="40.5" r="10.2"/><rect x="28" y="34" width="35.5" height="16.6"/></g><g fill="#fff"><circle cx="42" cy="36" r="12"/><circle cx="54" cy="38" r="10"/><circle cx="61.5" cy="43" r="5.8"/><circle cx="30.5" cy="40.5" r="8.2"/><rect x="30" y="36" width="31.5" height="12.8"/></g></svg>
<div class="t" style="left:1698.50px;top:900.00px;font-size:18px;color:#fff;letter-spacing:0.131px;">Screenshot gespeichert</div>
<div class="t" style="left:1698.50px;top:925.00px;font-size:18px;color:#a3a3a3;letter-spacing:0.150px;">Der Screenshot wurde Ihrem</div>
<div class="t" style="left:1698.50px;top:949.00px;font-size:18px;color:#a6a6a6;letter-spacing:0.369px;">hinzugefügt.</div>
<div class="t" style="left:1698.50px;top:977.00px;font-size:14.5px;color:#a6a6a6;letter-spacing:0.032px;">OneDrive</div>
<div class="a" style="left:0px;top:1030px;width:1920px;height:50px;background:linear-gradient(90deg,#120a16 0%,#0e0612 40%,#0b0408 65%,#100306 100%);"></div>
<svg class="a" style="left:20px;top:1045px;" width="20" height="20" viewBox="0 0 20 20"><path d="M0 2.8L8.2 1.7V9.5H0zM9.2 1.5L20 0V9.5H9.2zM0 10.5H8.2V18.3L0 17.2zM9.2 10.5H20V20L9.2 18.5z" fill="#fff"/></svg>
<svg class="a" style="left:80px;top:1045px;" width="21" height="20" viewBox="0 0 21 20"><circle cx="13" cy="7.5" r="6" fill="none" stroke="#fff" stroke-width="1.4"/><path d="M8.8 11.8L1 19.5" stroke="#fff" stroke-width="1.5"/></svg>
<svg class="a" style="left:137px;top:1046px;" width="26" height="18" viewBox="0 0 26 18"><rect x="5.2" y="0.7" width="15.6" height="16.6" fill="none" stroke="#fff" stroke-width="1.4"/><path d="M3.2 3.5H1.7v11h1.5M22.8 3.5h1.5v11h-1.5" fill="none" stroke="#fff" stroke-width="1.2"/></svg>
<svg class="a" style="left:201px;top:1042px;" width="26" height="27" viewBox="0 0 26 27"><path d="M25 16.3C25 7.5 20 0.5 13 0.5 7.5 0.5 2.5 4.5 0 12.5 2.5 8.5 6 6.5 9.5 6.3 6.5 9 4.3 12.5 4.3 16.5 4.3 22.8 9.5 27 16.5 27 19.5 27 22 26.3 24.5 25V20C22.8 21 20.8 21.6 18.8 21.6 15.3 21.6 12.6 19.6 12.3 16.3z" fill="#0c78d6"/><path d="M8.8 11C9.5 7.5 11.5 5.7 13.5 5.7 16 5.7 17.3 7.8 17.3 11z" fill="#0e0712"/></svg>
<div class="a" style="left:251px;top:1077px;width:190px;height:3px;background:#76b9ed;"></div>
<svg class="a" style="left:259px;top:1039px;" width="30" height="30" viewBox="0 0 30 30"><defs><linearGradient id="ieg" x1="0" y1="0" x2="1" y2="1"><stop offset="0" stop-color="#2aa8e6"/><stop offset="1" stop-color="#8fe0fb"/></linearGradient></defs><path d="M27.5 19C27.5 11 22.5 4.5 15.5 4.5 9 4.5 4 10 4 16.8 4 23.5 9 29 15.8 29 20.8 29 24.8 26.5 26.8 22.3H20.2C19.2 23.6 17.6 24.4 15.8 24.4 12.3 24.4 9.8 21.8 9.4 19z" fill="url(#ieg)"/><path d="M9.6 14C10.3 11 12.6 9.2 15.6 9.2 18.6 9.2 20.8 11 21.5 14z" fill="#0e0712"/><ellipse cx="15" cy="17" rx="17" ry="5" transform="rotate(-36 15 17)" fill="none" stroke="#f2c318" stroke-width="1.9"/></svg>
<div class="t" style="left:293.00px;top:1055.00px;font-size:15px;color:#fff;letter-spacing:-0.412px;">PC kaputt - neuer L...</div>
<svg class="a" style="left:462px;top:1039px;" width="30" height="30" viewBox="0 0 30 30"><defs><linearGradient id="tbg" x1="0.2" y1="0" x2="0.7" y2="1"><stop offset="0" stop-color="#58b6f2"/><stop offset="0.5" stop-color="#2a7fd8"/><stop offset="1" stop-color="#0c46a0"/></linearGradient></defs><path d="M15 1.5C23 1.5 29 8 29 15.5 29 23 23.5 29.5 16 29.5 12 29.5 10 28 9 27L18 27 19.5 14.5 3 13C2 16 2.5 20 4 22.5 1.5 20 0.8 17.5 0.8 15.5 0.8 8 7 1.5 15 1.5z" fill="url(#tbg)"/><path d="M5 9C7 5 11 3.5 15 4 13 5 11.5 7 11 10z" fill="#79c7f5"/><circle cx="9.2" cy="9.6" r="0.9" fill="#e07030"/><path d="M3 13L19.5 14.5 18.3 26.8 4 21.5z" fill="#ece8e3" stroke="#0e0612" stroke-width="0.8"/><path d="M3.5 13.5L11 19.5 19.3 15" fill="none" stroke="#7a7a7a" stroke-width="0.7"/></svg>
<div class="a" style="left:509px;top:1030px;width:200px;height:50px;background:rgba(255,255,255,0.17);"></div>
<div class="a" style="left:509px;top:1077px;width:200px;height:3px;background:#76b9ed;"></div>
<svg class="a" style="left:526px;top:1043px;" width="19" height="26" viewBox="0 0 19 26"><path d="M5 0.5h13.5v17h1v7.5H5z" fill="url(#fg)"/><path d="M0.5 0.5l5.5 4V25.5l-5.5-4z" fill="url(#ff)"/></svg>
<div class="t" style="left:555.80px;top:1055.00px;font-size:15px;color:#fff;letter-spacing:0.026px;">kxut94o7.default</div>
<div class="a" style="left:714px;top:1077px;width:190px;height:3px;background:#76b9ed;"></div>
<svg class="a" style="left:726px;top:1043px;" width="19" height="26" viewBox="0 0 19 26"><path d="M5 0.5h13.5v17h1v7.5H5z" fill="url(#fg)"/><path d="M0.5 0.5l5.5 4V25.5l-5.5-4z" fill="url(#ff)"/></svg>
<div class="t" style="left:756.00px;top:1055.00px;font-size:15px;color:#fff;letter-spacing:-0.525px;">Screenshots</div>
<svg class="a" style="left:925px;top:1040px;" width="30" height="30" viewBox="0 0 30 30"><rect x="0" y="0" width="30" height="30" rx="4" fill="#fff"/><path d="M6.5 3.5c2-2 6 0 8.5 4 2.5-4 6.5-6 8.5-4s-1 4.5-8.5 4.5C7.5 8 4.5 5.5 6.5 3.5z" fill="none" stroke="#c00" stroke-width="1.7"/><rect x="4.5" y="12" width="6.5" height="3" fill="#c00"/><rect x="14.5" y="12" width="6.5" height="3" fill="#c00"/><rect x="5.5" y="17" width="5.5" height="9" fill="#a80000"/><rect x="14.5" y="17" width="5.5" height="9" fill="#a80000"/></svg>
<svg class="a" style="left:988px;top:1040px;" width="28" height="30" viewBox="0 0 28 30"><path d="M0.5 8L26 6V30L26 30 0.5 26z" fill="#fff"/><path d="M6 8c0-5 3-8 5-8s5 3 5 7" fill="none" stroke="#fff" stroke-width="1.3"/><path d="M3 13l4-0.3v4.5H3zM8.3 12.6l4.7-0.3v4.9H8.3zM3 18.5h4v4.5l-4-0.5zM8.3 18.5H13v5l-4.7-0.4z" fill="#140a14"/></svg>
<svg class="a" style="left:1052px;top:1040px;" width="23" height="30" viewBox="0 0 23 30"><rect x="0" y="0" width="23" height="30" fill="#fff"/><rect x="2" y="2" width="19" height="5" fill="#140a14"/><path d="M2.0 11.0h4l-4 4z" fill="#140a14"/><path d="M8.5 11.0h4l-4 4z" fill="#140a14"/><path d="M15.0 11.0h4l-4 4z" fill="#140a14"/><path d="M2.0 17.5h4l-4 4z" fill="#140a14"/><path d="M8.5 17.5h4l-4 4z" fill="#140a14"/><path d="M15.0 17.5h4l-4 4z" fill="#140a14"/><path d="M2.0 24.0h4l-4 4z" fill="#140a14"/><path d="M8.5 24.0h4l-4 4z" fill="#140a14"/><path d="M15.0 24.0h4l-4 4z" fill="#140a14"/></svg>
<svg class="a" style="left:1609px;top:1049px;" width="18" height="11" viewBox="0 0 18 11"><path d="M1 10l8-8 8 8" fill="none" stroke="#fff" stroke-width="1.3"/></svg>
<svg class="a" style="left:1636px;top:1046px;" width="24" height="17" viewBox="0 0 24 17"><path d="M4.5 6.5v9" stroke="#fff" stroke-width="1.2"/><path d="M2.6 2.2v3a1.9 1.9 0 0 0 3.8 0v-3z" fill="none" stroke="#fff" stroke-width="1.1"/><path d="M3.6 0.8v1.6M5.4 0.8v1.6" stroke="#fff" stroke-width="0.9"/><rect x="6.6" y="4.4" width="14.6" height="10.8" fill="none" stroke="#fff" stroke-width="1.2"/><rect x="8" y="6.2" width="12" height="7.4" fill="#fff"/><rect x="21.2" y="7.6" width="1.3" height="4" fill="#fff"/></svg>
<svg class="a" style="left:1668px;top:1046px;" width="20" height="18" viewBox="0 0 20 18"><path d="M3.40 15.5A13.3 13.3 0 0 1 16.7 2.20" fill="none" stroke="#fff" stroke-width="1.25"/><path d="M7.20 15.5A9.5 9.5 0 0 1 16.7 6.00" fill="none" stroke="#fff" stroke-width="1.25"/><path d="M11.20 15.5A5.5 5.5 0 0 1 16.7 10.00" fill="none" stroke="#fff" stroke-width="1.25"/><circle cx="16.7" cy="15.5" r="1.4" fill="#fff"/></svg>
<svg class="a" style="left:1696px;top:1046px;" width="24" height="19" viewBox="0 0 24 19"><path d="M2.6 6.2H5.6L9.3 2.6V16.4L5.6 12.8H2.6Z" fill="none" stroke="#fff" stroke-width="1.2"/><path d="M11.34 6.88A3.2 3.2 0 0 1 11.34 12.12" fill="none" stroke="#fff" stroke-width="1.2" opacity="1"/><path d="M13.06 4.42A6.2 6.2 0 0 1 13.06 14.58" fill="none" stroke="#fff" stroke-width="1.2" opacity="1"/><path d="M15.41 1.06A10.3 10.3 0 0 1 15.41 17.94" fill="none" stroke="#fff" stroke-width="1.2" opacity="0.55"/></svg>
<div class="t" style="left:1731.80px;top:1055.00px;font-size:15px;color:#fff;letter-spacing:-1.390px;">DEU</div>
<div class="t" style="left:1792.80px;top:1043.00px;font-size:15px;color:#fff;letter-spacing:-0.467px;">21:09</div>
<div class="t" style="left:1776.50px;top:1065.00px;font-size:15px;color:#fff;letter-spacing:-0.637px;">04.03.2017</div>
<svg class="a" style="left:1868px;top:1044px;" width="32" height="30" viewBox="0 0 32 30"><path d="M1 1h20v16H9l-3 3v-3H1z" fill="#fff"/><path d="M4 5h14M4 8.5h14M4 12h14" stroke="#140a14" stroke-width="1.1"/><circle cx="21" cy="20" r="9" fill="#3a3a3a" stroke="#9a9a9a" stroke-width="1"/><text x="21" y="25.2" text-anchor="middle" font-family="Liberation Sans" font-weight="bold" font-size="14" fill="#fff">2</text></svg>
<div class="a" style="left:1914px;top:1030px;width:1px;height:50px;background:#4a4a4a;"></div>
</body></html>
